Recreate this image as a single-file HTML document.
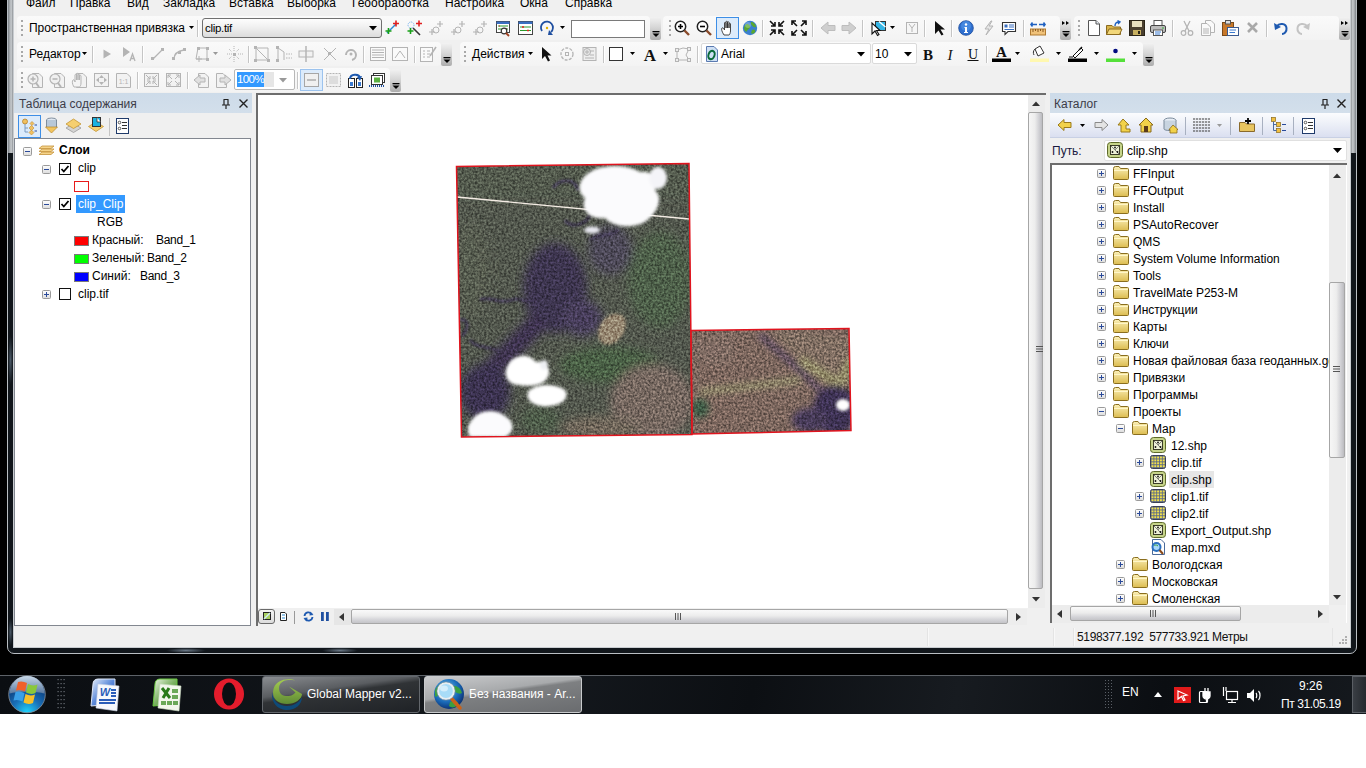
<!DOCTYPE html>
<html><head><meta charset="utf-8">
<style>
*{margin:0;padding:0;box-sizing:border-box}
html,body{width:1366px;height:768px;overflow:hidden;background:#fff;font-family:"Liberation Sans",sans-serif;font-size:12px;color:#000}
.a{position:absolute}
.t{white-space:nowrap}
svg{overflow:visible}
</style></head><body>
<div class="a" style="left:0px;top:0px;width:1366px;height:675px;background:#000"></div>
<div class="a" style="left:7px;top:-10px;width:1350px;height:664px;background:#11161b;border:1px solid #b9bec3;border-radius:0 0 7px 7px"></div>
<div class="a" style="left:8px;top:0px;width:5px;height:153px;background:linear-gradient(90deg,#7d8287 0%,#a9adb1 35%,#c6cacd 65%,#8f9397 100%)"></div>
<div class="a" style="left:1351px;top:0px;width:5px;height:153px;background:linear-gradient(90deg,#8f9397 0%,#c6cacd 35%,#a9adb1 65%,#7d8287 100%)"></div>
<div class="a" style="left:8px;top:335px;width:5px;height:50px;background:radial-gradient(ellipse at center,#4a5866 0%,#11161b 70%)"></div>
<div class="a" style="left:8px;top:618px;width:5px;height:28px;background:radial-gradient(ellipse at center,#4a5866 0%,#11161b 70%)"></div>
<div class="a" style="left:166px;top:648px;width:40px;height:5px;background:radial-gradient(ellipse at center,#6a7886 0%,#11161b 70%)"></div>
<div class="a" style="left:322px;top:648px;width:36px;height:5px;background:radial-gradient(ellipse at center,#6a7886 0%,#11161b 70%)"></div>
<div class="a" style="left:13px;top:-10px;width:1338px;height:658px;border:1px solid #c8ccd0"></div>
<div class="a" style="left:14px;top:0px;width:1336px;height:647px;background:#f0f0f0"></div>
<div class="a t" style="left:26px;top:-3.16px;font-size:12px;line-height:12px;">Файл</div>
<div class="a t" style="left:70px;top:-3.16px;font-size:12px;line-height:12px;">Правка</div>
<div class="a t" style="left:127px;top:-3.16px;font-size:12px;line-height:12px;">Вид</div>
<div class="a t" style="left:163px;top:-3.16px;font-size:12px;line-height:12px;">Закладка</div>
<div class="a t" style="left:229px;top:-3.16px;font-size:12px;line-height:12px;">Вставка</div>
<div class="a t" style="left:287px;top:-3.16px;font-size:12px;line-height:12px;">Выборка</div>
<div class="a t" style="left:352px;top:-3.16px;font-size:12px;line-height:12px;">Геообработка</div>
<div class="a t" style="left:445px;top:-3.16px;font-size:12px;line-height:12px;">Настройка</div>
<div class="a t" style="left:520px;top:-3.16px;font-size:12px;line-height:12px;">Окна</div>
<div class="a t" style="left:565px;top:-3.16px;font-size:12px;line-height:12px;">Справка</div>
<div class="a" style="left:17px;top:16px;width:633px;height:24px;background:linear-gradient(180deg,#fafafa,#f3f3f3);border-radius:4px"></div>
<div class="a" style="left:21px;top:20.0px;width:2px;height:2px;background:#a8a8a8"></div>
<div class="a" style="left:21px;top:24.5px;width:2px;height:2px;background:#a8a8a8"></div>
<div class="a" style="left:21px;top:29.0px;width:2px;height:2px;background:#a8a8a8"></div>
<div class="a" style="left:21px;top:33.5px;width:2px;height:2px;background:#a8a8a8"></div>
<div class="a t" style="left:29px;top:21.84px;font-size:12px;line-height:12px;letter-spacing:-0.08px">Пространственная привязка</div>
<svg class="a" style="left:189px;top:26px;" width="5" height="3" viewBox="0 0 5 3"><path d="M0 0H5L2.5 3Z" fill="#000"/></svg>
<div class="a" style="left:197px;top:20px;width:1px;height:17px;background:#c5c5c5;box-shadow:1px 0 0 #fff"></div>
<div class="a" style="left:202px;top:18px;width:180px;height:20px;background:linear-gradient(180deg,#fdfdfd 0%,#f0f0f0 45%,#dcdcdc 100%);border:1px solid #707070;border-radius:3px"></div>
<div class="a t" style="left:205px;top:23.27px;font-size:11.5px;line-height:11.5px;letter-spacing:-0.3px">clip.tif</div>
<svg class="a" style="left:369px;top:26px;" width="8" height="5" viewBox="0 0 8 5"><path d="M0 0H8L4 4.5Z" fill="#000"/></svg>
<svg class="a" style="left:384px;top:20px;" width="16" height="16" viewBox="0 0 16 16"><path d="M3 13L12 4" stroke="#2a8ad4" stroke-width="1.4"/><path d="M4.5 8V14M1.5 11H7.5" stroke="#18a018" stroke-width="1.6"/><path d="M12 0.5V6.5M9 3.5H15" stroke="#e02020" stroke-width="1.6"/></svg>
<svg class="a" style="left:406px;top:20px;" width="16" height="16" viewBox="0 0 16 16"><path d="M7 8L14 15" stroke="#333" stroke-width="1.6"/><circle cx="5" cy="5" r="3" fill="none" stroke="#66aaee" stroke-dasharray="1 1"/><path d="M4.5 8V14M1.5 11H7.5" stroke="#18a018" stroke-width="1.6"/><path d="M13 0.5V6.5M10 3.5H16" stroke="#e02020" stroke-width="1.6"/></svg>
<svg class="a" style="left:428px;top:20px;" width="16" height="16" viewBox="0 0 16 16"><path d="M12 1V7M9 4H15" stroke="#b4b4b4" stroke-width="1.2"/><path d="M4 9V15M1 12H7" stroke="#b4b4b4" stroke-width="1.2"/><circle cx="8" cy="10" r="3" fill="none" stroke="#b4b4b4"/></svg>
<svg class="a" style="left:450px;top:20px;" width="16" height="16" viewBox="0 0 16 16"><path d="M12 1V7M9 4H15" stroke="#b4b4b4" stroke-width="1.2"/><path d="M4 9V15M1 12H7" stroke="#b4b4b4" stroke-width="1.2"/><circle cx="8" cy="10" r="3" fill="none" stroke="#b4b4b4"/></svg>
<svg class="a" style="left:472px;top:20px;" width="16" height="16" viewBox="0 0 16 16"><path d="M12 1V7M9 4H15" stroke="#b4b4b4" stroke-width="1.2"/><path d="M4 9V15M1 12H7" stroke="#b4b4b4" stroke-width="1.2"/><circle cx="8" cy="10" r="3" fill="none" stroke="#b4b4b4"/></svg>
<svg class="a" style="left:495px;top:20px;" width="16" height="16" viewBox="0 0 16 16"><rect x="1.5" y="1.5" width="13" height="11" fill="#fff" stroke="#444"/><rect x="1.5" y="1.5" width="13" height="2.5" fill="#3a6fc0"/><path d="M3 6H13M3 9H13" stroke="#2a9a2a" stroke-width="1.2"/><path d="M4 6h1M10 9h2" stroke="#e02020" stroke-width="1.2"/><circle cx="9" cy="11" r="2.8" fill="#fff" stroke="#333" stroke-width="1.2"/><path d="M11 13L14 16" stroke="#a04020" stroke-width="1.8"/></svg>
<svg class="a" style="left:517px;top:20px;" width="16" height="16" viewBox="0 0 16 16"><rect x="1.5" y="1.5" width="14" height="13" fill="#fff" stroke="#444"/><rect x="1.5" y="1.5" width="14" height="2.5" fill="#3a6fc0"/><path d="M3 7H14M3 10.5H14" stroke="#2a9a2a" stroke-width="1.2"/><path d="M5 7h2M10 10.5h2" stroke="#e02020" stroke-width="1.4"/></svg>
<svg class="a" style="left:539px;top:20px;" width="16" height="16" viewBox="0 0 16 16"><path d="M3 11A6 6 0 1 1 12 12" fill="none" stroke="#1f4fa0" stroke-width="1.8"/><path d="M10 10L14 15L9 15Z" fill="#1f4fa0"/><circle cx="8" cy="8" r="1.2" fill="#e0b000"/></svg>
<svg class="a" style="left:560px;top:26px;" width="5" height="3" viewBox="0 0 5 3"><path d="M0 0H5L2.5 3Z" fill="#000"/></svg>
<div class="a" style="left:571px;top:20px;width:74px;height:18px;background:#fff;border:1px solid #7a7a7a"></div>
<div class="a" style="left:650px;top:17px;width:11px;height:23px;background:linear-gradient(180deg,#f2f2f2 0%,#d6d6d6 45%,#adadad 100%);border-radius:0 2px 2px 2px"></div>
<svg class="a" style="left:652px;top:31px;" width="8" height="6" viewBox="0 0 8 6"><rect x="0.5" y="0" width="7" height="1.3" fill="#000"/><path d="M0.5 2.5H7.5L4 6Z" fill="#000"/></svg>
<div class="a" style="left:663px;top:16px;width:397px;height:24px;background:linear-gradient(180deg,#fafafa,#f3f3f3);border-radius:4px"></div>
<div class="a" style="left:669px;top:20.0px;width:2px;height:2px;background:#a8a8a8"></div>
<div class="a" style="left:669px;top:24.5px;width:2px;height:2px;background:#a8a8a8"></div>
<div class="a" style="left:669px;top:29.0px;width:2px;height:2px;background:#a8a8a8"></div>
<div class="a" style="left:669px;top:33.5px;width:2px;height:2px;background:#a8a8a8"></div>
<svg class="a" style="left:674px;top:20px;" width="16" height="16" viewBox="0 0 16 16"><circle cx="6.5" cy="6.5" r="5.2" fill="#fff" stroke="#222" stroke-width="1.5"/><path d="M4 6.5H9M6.5 4V9" stroke="#000" stroke-width="1.6"/><path d="M10.5 10.5L15 15" stroke="#8a4a2a" stroke-width="2.4"/></svg>
<svg class="a" style="left:696px;top:20px;" width="16" height="16" viewBox="0 0 16 16"><circle cx="6.5" cy="6.5" r="5.2" fill="#fff" stroke="#222" stroke-width="1.5"/><path d="M4 6.5H9" stroke="#000" stroke-width="1.6"/><path d="M10.5 10.5L15 15" stroke="#8a4a2a" stroke-width="2.4"/></svg>
<div class="a" style="left:716px;top:17px;width:23px;height:22px;background:#dcebfb;border:1px solid #3d8ee6"></div>
<svg class="a" style="left:720px;top:20px;" width="16" height="16" viewBox="0 0 16 16"><path d="M4 15C2 12 1 9 2 8C3 7 4 9 4.5 10V3C4.5 2 6 2 6 3V8V2C6 1 7.5 1 7.5 2V8V2.5C7.5 1.5 9 1.5 9 2.5V8V4C9 3 10.5 3 10.5 4V11C10.5 13 9.5 15 9 15Z" fill="#fff" stroke="#333" stroke-width="0.9"/></svg>
<svg class="a" style="left:742px;top:20px;" width="16" height="16" viewBox="0 0 16 16"><circle cx="8" cy="8" r="7.2" fill="#3b7fd0"/><path d="M3 5C5 3 7 4 8 6C9 8 6 9 5 11C4 13 2 10 2 8Z M9 2C11 2 14 4 14 7C12 8 10 6 9 4Z M10 10C12 9 14 10 13 12C12 14 10 14 9 13Z" fill="#5aa830"/><circle cx="6" cy="5" r="3" fill="#fff" opacity="0.25"/></svg>
<div class="a" style="left:762px;top:20px;width:1px;height:17px;background:#c5c5c5;box-shadow:1px 0 0 #fff"></div>
<svg class="a" style="left:769px;top:20px;" width="16" height="16" viewBox="0 0 16 16"><path d="M1 1L6 6M6 2V6H2M15 1L10 6M10 2V6H14M1 15L6 10M2 10H6V14M15 15L10 10M14 10H10V14" stroke="#111" stroke-width="1.6" fill="none"/></svg>
<svg class="a" style="left:791px;top:20px;" width="16" height="16" viewBox="0 0 16 16"><path d="M6 6L1 1M1 5V1H5M10 6L15 1M11 1H15V5M6 10L1 15M1 11V15H5M10 10L15 15M15 11V15H11" stroke="#111" stroke-width="1.6" fill="none"/></svg>
<div class="a" style="left:812px;top:20px;width:1px;height:17px;background:#c5c5c5;box-shadow:1px 0 0 #fff"></div>
<svg class="a" style="left:820px;top:20px;" width="16" height="16" viewBox="0 0 16 16"><path d="M1 8L8 2V5.5H15V10.5H8V14Z" fill="#cfcfcf" stroke="#bdbdbd"/></svg>
<svg class="a" style="left:841px;top:20px;" width="16" height="16" viewBox="0 0 16 16"><path d="M15 8L8 2V5.5H1V10.5H8V14Z" fill="#cfcfcf" stroke="#bdbdbd"/></svg>
<div class="a" style="left:862px;top:20px;width:1px;height:17px;background:#c5c5c5;box-shadow:1px 0 0 #fff"></div>
<svg class="a" style="left:870px;top:20px;" width="16" height="16" viewBox="0 0 16 16"><rect x="5.5" y="1.5" width="10" height="9" fill="#35b5e5" stroke="#333"/><path d="M9 1.5L15.5 7" stroke="#fff" stroke-width="1.5"/><path d="M2 3L2 14L5 11L7.5 15.5L9 14.5L6.5 10.5H10Z" fill="#fff" stroke="#111" stroke-width="1.1"/></svg>
<svg class="a" style="left:890px;top:26px;" width="5" height="3" viewBox="0 0 5 3"><path d="M0 0H5L2.5 3Z" fill="#000"/></svg>
<svg class="a" style="left:905px;top:20px;" width="14" height="16" viewBox="0 0 14 16"><rect x="1.5" y="2.5" width="11" height="11" fill="#f6f6f6" stroke="#b4b4b4"/><path d="M4 4L7 8L10 4M7 8V12" stroke="#b4b4b4" fill="none"/></svg>
<div class="a" style="left:924px;top:20px;width:1px;height:17px;background:#c5c5c5;box-shadow:1px 0 0 #fff"></div>
<svg class="a" style="left:933px;top:20px;" width="16" height="16" viewBox="0 0 16 16"><path d="M2 1L2 14L5.5 10.5L8.5 15.5L10.5 14.5L7.5 9.5H12Z" fill="#111"/></svg>
<div class="a" style="left:951px;top:20px;width:1px;height:17px;background:#c5c5c5;box-shadow:1px 0 0 #fff"></div>
<svg class="a" style="left:958px;top:20px;" width="16" height="16" viewBox="0 0 16 16"><circle cx="8" cy="8" r="7.3" fill="#2f6fcf" stroke="#1a4a9a" stroke-width="0.8"/><circle cx="8" cy="6" r="5" fill="#5aa0f0" opacity="0.5"/><circle cx="8" cy="4.5" r="1.2" fill="#fff"/><path d="M6.5 7H9V12H10V13H6V12H7V8H6.5Z" fill="#fff"/></svg>
<svg class="a" style="left:981px;top:20px;" width="16" height="16" viewBox="0 0 16 16"><path d="M10 1L4 9H8L5 15L12 6H8L11 1Z" fill="#e6e6e6" stroke="#b4b4b4"/></svg>
<svg class="a" style="left:1001px;top:20px;" width="16" height="16" viewBox="0 0 16 16"><path d="M1.5 2.5H14.5V11.5H7L4 14.5V11.5H1.5Z" fill="#fff" stroke="#333" stroke-width="1.1"/><rect x="3.5" y="4.5" width="3" height="3" fill="#3a6fc0"/><path d="M8 5H13M8 7H13M3.5 9.5H13" stroke="#3a6fc0"/></svg>
<div class="a" style="left:1023px;top:20px;width:1px;height:17px;background:#c5c5c5;box-shadow:1px 0 0 #fff"></div>
<svg class="a" style="left:1030px;top:20px;" width="16" height="16" viewBox="0 0 16 16"><path d="M1 4.5H7M2.5 2.5L1 4.5L2.5 6.5M9 4.5H15M13.5 2.5L15 4.5L13.5 6.5" stroke="#1f60c0" stroke-width="1.6" fill="none"/><rect x="0.5" y="9" width="15" height="6" fill="#f0c27a" stroke="#b07a30"/><path d="M3 9V12M5.5 9V11M8 9V12M10.5 9V11M13 9V12" stroke="#8a5a20"/></svg>
<div class="a" style="left:1060px;top:17px;width:11px;height:23px;background:linear-gradient(180deg,#f2f2f2 0%,#d6d6d6 45%,#adadad 100%);border-radius:0 2px 2px 2px"></div>
<svg class="a" style="left:1062px;top:21px;" width="8" height="4" viewBox="0 0 8 4"><path d="M0 0L3 2L0 4Z M4 0L7 2L4 4Z" fill="#000"/></svg>
<svg class="a" style="left:1062px;top:31px;" width="8" height="6" viewBox="0 0 8 6"><rect x="0.5" y="0" width="7" height="1.3" fill="#000"/><path d="M0.5 2.5H7.5L4 6Z" fill="#000"/></svg>
<div class="a" style="left:1074px;top:16px;width:265px;height:24px;background:linear-gradient(180deg,#fafafa,#f3f3f3);border-radius:4px"></div>
<div class="a" style="left:1078px;top:20.0px;width:2px;height:2px;background:#a8a8a8"></div>
<div class="a" style="left:1078px;top:24.5px;width:2px;height:2px;background:#a8a8a8"></div>
<div class="a" style="left:1078px;top:29.0px;width:2px;height:2px;background:#a8a8a8"></div>
<div class="a" style="left:1078px;top:33.5px;width:2px;height:2px;background:#a8a8a8"></div>
<svg class="a" style="left:1086px;top:20px;" width="16" height="16" viewBox="0 0 16 16"><path d="M2.5 0.5H10L13.5 4V15.5H2.5Z" fill="#fff" stroke="#555"/><path d="M10 0.5V4H13.5" fill="#e8eef8" stroke="#555"/></svg>
<svg class="a" style="left:1106px;top:20px;" width="17" height="16" viewBox="0 0 17 16"><path d="M0.5 5.5H6L7.5 7H14.5V14.5H0.5Z" fill="#d9b44a" stroke="#8a6a20"/><path d="M3 9H16L13.5 14.5H0.5Z" fill="#f2d77a" stroke="#8a6a20"/><path d="M9 6C9 3 11 2 13 2M11.5 0.5L14 2L12 4" stroke="#1f60c0" stroke-width="1.4" fill="none"/></svg>
<svg class="a" style="left:1129px;top:20px;" width="16" height="16" viewBox="0 0 16 16"><rect x="0.5" y="0.5" width="15" height="15" fill="#4a4030" stroke="#2a2418"/><rect x="3" y="1" width="10" height="6" fill="#e8e0c0"/><rect x="4" y="10" width="8" height="5" fill="#c8b060"/><rect x="9" y="11" width="2" height="3" fill="#2a2418"/></svg>
<svg class="a" style="left:1150px;top:20px;" width="16" height="16" viewBox="0 0 16 16"><rect x="4" y="0.5" width="8" height="6" fill="#fff" stroke="#555"/><rect x="0.5" y="5.5" width="15" height="7" rx="1.5" fill="#bbb" stroke="#444"/><rect x="3.5" y="10" width="9" height="5.5" fill="#fff" stroke="#555"/><path d="M5 12H11M5 14H10" stroke="#3a7ad0"/><circle cx="13" cy="8" r="0.8" fill="#2a2"/></svg>
<div class="a" style="left:1172px;top:20px;width:1px;height:17px;background:#c5c5c5;box-shadow:1px 0 0 #fff"></div>
<svg class="a" style="left:1179px;top:20px;" width="16" height="16" viewBox="0 0 16 16"><path d="M5 1L10 11M11 1L6 11" stroke="#b4b4b4" stroke-width="1.3"/><circle cx="4.5" cy="13" r="2.3" fill="none" stroke="#b4b4b4" stroke-width="1.2"/><circle cx="11.5" cy="13" r="2.3" fill="none" stroke="#b4b4b4" stroke-width="1.2"/></svg>
<svg class="a" style="left:1200px;top:20px;" width="16" height="16" viewBox="0 0 16 16"><path d="M5.5 0.5H11L14.5 4V12.5H5.5Z" fill="#fafafa" stroke="#b4b4b4"/><path d="M1.5 3.5H7L10.5 7V15.5H1.5Z" fill="#fafafa" stroke="#b4b4b4"/><path d="M3 9H9M3 11H9M3 13H9" stroke="#b4b4b4"/></svg>
<svg class="a" style="left:1222px;top:20px;" width="17" height="16" viewBox="0 0 17 16"><rect x="0.5" y="2.5" width="11" height="13" fill="#c8782a" stroke="#7a4a1a"/><rect x="3.5" y="0.5" width="5" height="3.5" fill="#ddd" stroke="#555"/><rect x="5.5" y="7.5" width="11" height="8" fill="#fff" stroke="#3a5a90"/><path d="M7.5 10H14M7.5 12.5H13" stroke="#3a7ad0"/></svg>
<svg class="a" style="left:1247px;top:22px;" width="11" height="11" viewBox="0 0 11 11"><path d="M1 1L10 10M10 1L1 10" stroke="#a9a9a9" stroke-width="2.6"/></svg>
<div class="a" style="left:1266px;top:20px;width:1px;height:17px;background:#c5c5c5;box-shadow:1px 0 0 #fff"></div>
<svg class="a" style="left:1273px;top:20px;" width="16" height="16" viewBox="0 0 16 16"><path d="M4 6C6 3 13 3 13.5 8C14 12 11 14 9 14" stroke="#1f5ab0" stroke-width="2" fill="none"/><path d="M1 3L2 10L8 7Z" fill="#1f5ab0"/></svg>
<svg class="a" style="left:1295px;top:20px;" width="16" height="16" viewBox="0 0 16 16"><path d="M12 6C10 3 3 3 2.5 8C2 12 5 14 7 14" stroke="#c4c4c4" stroke-width="2" fill="none"/><path d="M15 3L14 10L8 7Z" fill="#c4c4c4"/></svg>
<div class="a" style="left:1339px;top:17px;width:11px;height:23px;background:linear-gradient(180deg,#f2f2f2 0%,#d6d6d6 45%,#adadad 100%);border-radius:0 2px 2px 2px"></div>
<svg class="a" style="left:1341px;top:21px;" width="8" height="4" viewBox="0 0 8 4"><path d="M0 0L3 2L0 4Z M4 0L7 2L4 4Z" fill="#000"/></svg>
<svg class="a" style="left:1341px;top:31px;" width="8" height="6" viewBox="0 0 8 6"><rect x="0.5" y="0" width="7" height="1.3" fill="#000"/><path d="M0.5 2.5H7.5L4 6Z" fill="#000"/></svg>
<div class="a" style="left:17px;top:42px;width:424px;height:24px;background:linear-gradient(180deg,#fafafa,#f3f3f3);border-radius:4px"></div>
<div class="a" style="left:21px;top:46.0px;width:2px;height:2px;background:#a8a8a8"></div>
<div class="a" style="left:21px;top:50.5px;width:2px;height:2px;background:#a8a8a8"></div>
<div class="a" style="left:21px;top:55.0px;width:2px;height:2px;background:#a8a8a8"></div>
<div class="a" style="left:21px;top:59.5px;width:2px;height:2px;background:#a8a8a8"></div>
<div class="a t" style="left:29px;top:47.84px;font-size:12px;line-height:12px;">Редактор</div>
<svg class="a" style="left:82px;top:52px;" width="5" height="3" viewBox="0 0 5 3"><path d="M0 0H5L2.5 3Z" fill="#000"/></svg>
<div class="a" style="left:92px;top:46px;width:1px;height:17px;background:#c5c5c5;box-shadow:1px 0 0 #fff"></div>
<svg class="a" style="left:103px;top:49px;" width="10" height="10" viewBox="0 0 10 10"><path d="M0.5 0.5V9.5L8 5Z" fill="#b4b4b4"/></svg>
<svg class="a" style="left:122px;top:46px;" width="14" height="16" viewBox="0 0 14 16"><path d="M1 1V11L8 6Z" fill="#b4b4b4"/><path d="M8 15L10.5 8L13 15M9 12.5H12" stroke="#b4b4b4" stroke-width="1.3" fill="none"/></svg>
<div class="a" style="left:142px;top:46px;width:1px;height:17px;background:#c5c5c5;box-shadow:1px 0 0 #fff"></div>
<svg class="a" style="left:151px;top:47px;" width="14" height="14" viewBox="0 0 14 14"><path d="M2 12L11 3" stroke="#b4b4b4" stroke-width="1.3"/><rect x="0" y="10" width="3" height="3" fill="#b4b4b4"/><rect x="10" y="1" width="3" height="3" fill="#b4b4b4"/></svg>
<svg class="a" style="left:172px;top:47px;" width="14" height="14" viewBox="0 0 14 14"><path d="M2 12C2 7 6 4 12 3" stroke="#b4b4b4" stroke-width="1.3" fill="none"/><rect x="0" y="10" width="3" height="3" fill="#b4b4b4"/><rect x="6" y="4" width="3" height="3" fill="#b4b4b4"/><rect x="11" y="1" width="3" height="3" fill="#b4b4b4"/></svg>
<svg class="a" style="left:194px;top:46px;" width="16" height="16" viewBox="0 0 16 16"><path d="M4 2H13V13H2Z" stroke="#b4b4b4" fill="none"/><rect x="3" y="1" width="3" height="3" fill="#b4b4b4"/><rect x="12" y="1" width="3" height="3" fill="#b4b4b4"/><rect x="12" y="12" width="3" height="3" fill="#b4b4b4"/><path d="M5 10V16M2 13H8" stroke="#b4b4b4"/></svg>
<svg class="a" style="left:213px;top:52px;" width="5" height="3" viewBox="0 0 5 3"><path d="M0 0H5L2.5 3Z" fill="#999"/></svg>
<svg class="a" style="left:227px;top:46px;" width="16" height="16" viewBox="0 0 16 16"><path d="M7 0V5M7 11V16M0 8H5M11 8H16M2 3L5 6M12 3L9 6M2 13L5 10M12 13L9 10" stroke="#b4b4b4" stroke-dasharray="1 1"/><rect x="6" y="7" width="3" height="3" fill="#b4b4b4"/></svg>
<div class="a" style="left:248px;top:46px;width:1px;height:17px;background:#c5c5c5;box-shadow:1px 0 0 #fff"></div>
<svg class="a" style="left:254px;top:46px;" width="16" height="16" viewBox="0 0 16 16"><path d="M2 2H14L14 14L2 14Z" stroke="#b4b4b4" fill="none"/><path d="M2 2L14 14" stroke="#b4b4b4"/><rect x="0" y="0" width="3" height="3" fill="#b4b4b4"/><rect x="13" y="13" width="3" height="3" fill="#b4b4b4"/><rect x="0" y="13" width="3" height="3" fill="#b4b4b4"/></svg>
<svg class="a" style="left:276px;top:46px;" width="16" height="16" viewBox="0 0 16 16"><path d="M2 2V14M2 2L8 6V14" stroke="#b4b4b4" fill="none"/><path d="M10 8H16M10 12H16" stroke="#b4b4b4" stroke-dasharray="1.5 1"/><rect x="0" y="0" width="3" height="3" fill="#b4b4b4"/><rect x="0" y="13" width="3" height="3" fill="#b4b4b4"/></svg>
<svg class="a" style="left:298px;top:46px;" width="16" height="16" viewBox="0 0 16 16"><rect x="1" y="5" width="14" height="6" fill="#f2f2f2" stroke="#b4b4b4"/><path d="M8 0V16" stroke="#b4b4b4" stroke-width="1.5"/></svg>
<svg class="a" style="left:322px;top:46px;" width="14" height="16" viewBox="0 0 14 16"><path d="M2 14L14 2M2 2L14 14" stroke="#b4b4b4"/><rect x="6" y="6" width="3" height="3" fill="#b4b4b4"/></svg>
<svg class="a" style="left:343px;top:46px;" width="14" height="16" viewBox="0 0 14 16"><path d="M3 9A5 5 0 1 1 9 14" stroke="#b4b4b4" stroke-width="2" fill="none"/><circle cx="8" cy="8" r="1.5" fill="#b4b4b4"/></svg>
<div class="a" style="left:363px;top:46px;width:1px;height:17px;background:#c5c5c5;box-shadow:1px 0 0 #fff"></div>
<svg class="a" style="left:370px;top:46px;" width="16" height="16" viewBox="0 0 16 16"><rect x="0.5" y="1.5" width="15" height="13" fill="#fafafa" stroke="#b4b4b4"/><path d="M2 4H14M2 6.5H14M2 9H14M2 11.5H14" stroke="#b4b4b4"/></svg>
<svg class="a" style="left:392px;top:46px;" width="16" height="16" viewBox="0 0 16 16"><rect x="0.5" y="1.5" width="15" height="13" fill="#fafafa" stroke="#b4b4b4"/><path d="M3 12L8 5L13 12" stroke="#b4b4b4" fill="none"/></svg>
<div class="a" style="left:414px;top:46px;width:1px;height:17px;background:#c5c5c5;box-shadow:1px 0 0 #fff"></div>
<svg class="a" style="left:420px;top:46px;" width="16" height="16" viewBox="0 0 16 16"><rect x="0.5" y="1.5" width="12" height="14" fill="#fafafa" stroke="#b4b4b4"/><path d="M3 5H5M7 5H10M3 8H5M7 8H10M3 11H5M7 11H10" stroke="#b4b4b4"/><path d="M10 10L16 1" stroke="#b4b4b4" stroke-width="1.6"/></svg>
<div class="a" style="left:441px;top:43px;width:11px;height:23px;background:linear-gradient(180deg,#f2f2f2 0%,#d6d6d6 45%,#adadad 100%);border-radius:0 2px 2px 2px"></div>
<svg class="a" style="left:443px;top:57px;" width="8" height="6" viewBox="0 0 8 6"><rect x="0.5" y="0" width="7" height="1.3" fill="#000"/><path d="M0.5 2.5H7.5L4 6Z" fill="#000"/></svg>
<div class="a" style="left:460px;top:42px;width:683px;height:24px;background:linear-gradient(180deg,#fafafa,#f3f3f3);border-radius:4px"></div>
<div class="a" style="left:464px;top:46.0px;width:2px;height:2px;background:#a8a8a8"></div>
<div class="a" style="left:464px;top:50.5px;width:2px;height:2px;background:#a8a8a8"></div>
<div class="a" style="left:464px;top:55.0px;width:2px;height:2px;background:#a8a8a8"></div>
<div class="a" style="left:464px;top:59.5px;width:2px;height:2px;background:#a8a8a8"></div>
<div class="a t" style="left:472px;top:47.84px;font-size:12px;line-height:12px;">Действия</div>
<svg class="a" style="left:528px;top:52px;" width="5" height="3" viewBox="0 0 5 3"><path d="M0 0H5L2.5 3Z" fill="#000"/></svg>
<svg class="a" style="left:541px;top:46px;" width="11" height="16" viewBox="0 0 11 16"><path d="M1 1L1 13L4 10L7 15.5L9 14.5L6.5 9.5H10.5Z" fill="#111"/></svg>
<svg class="a" style="left:559px;top:46px;" width="16" height="16" viewBox="0 0 16 16"><circle cx="8" cy="8" r="6" fill="none" stroke="#b4b4b4" stroke-width="1.3" stroke-dasharray="3 1.3"/><rect x="6.5" y="6.5" width="3" height="3" fill="none" stroke="#b4b4b4"/></svg>
<svg class="a" style="left:581px;top:46px;" width="16" height="16" viewBox="0 0 16 16"><rect x="2" y="1.5" width="13" height="13" fill="#eee" stroke="#b4b4b4"/><circle cx="6" cy="6" r="3.5" fill="#e6e6e6" stroke="#b4b4b4"/><path d="M4 6H8M6 4V8" stroke="#b4b4b4"/><path d="M9 5H13M9 9H13M4 12H13" stroke="#b4b4b4"/></svg>
<div class="a" style="left:603px;top:46px;width:1px;height:17px;background:#c5c5c5;box-shadow:1px 0 0 #fff"></div>
<svg class="a" style="left:609px;top:47px;" width="14" height="14" viewBox="0 0 14 14"><rect x="0.5" y="0.5" width="13" height="13" fill="#fff" stroke="#333"/></svg>
<svg class="a" style="left:630px;top:52px;" width="5" height="3" viewBox="0 0 5 3"><path d="M0 0H5L2.5 3Z" fill="#000"/></svg>
<svg class="a" style="left:642px;top:46px;" width="16" height="16" viewBox="0 0 16 16"><text x="8" y="14.5" text-anchor="middle" font-family="Liberation Serif" font-weight="bold" font-size="17" fill="#111">A</text></svg>
<svg class="a" style="left:663px;top:52px;" width="5" height="3" viewBox="0 0 5 3"><path d="M0 0H5L2.5 3Z" fill="#000"/></svg>
<svg class="a" style="left:675px;top:46px;" width="16" height="16" viewBox="0 0 16 16"><path d="M2 4L8 2L14 3L11 9L14 14L2 14Z" stroke="#b4b4b4" fill="none"/><rect x="0.5" y="2.5" width="3" height="3" fill="#eee" stroke="#b4b4b4"/><rect x="12.5" y="1.5" width="3" height="3" fill="#eee" stroke="#b4b4b4"/><rect x="12.5" y="12.5" width="3" height="3" fill="#eee" stroke="#b4b4b4"/><rect x="0.5" y="12.5" width="3" height="3" fill="#eee" stroke="#b4b4b4"/></svg>
<div class="a" style="left:697px;top:46px;width:1px;height:17px;background:#c5c5c5;box-shadow:1px 0 0 #fff"></div>
<div class="a" style="left:701px;top:43px;width:170px;height:21px;background:#fff;border:1px solid #dadada;border-radius:2px"></div>
<svg class="a" style="left:704px;top:46px;" width="14" height="16" viewBox="0 0 14 16"><path d="M2.5 0.5H10L13.5 4V15.5H2.5Z" fill="#cfe0f5" stroke="#5a7ab0"/><ellipse cx="7.5" cy="9" rx="3" ry="4.3" fill="none" stroke="#0a6a3a" stroke-width="2" transform="rotate(20 7.5 9)"/></svg>
<div class="a t" style="left:721px;top:47.84px;font-size:12px;line-height:12px;">Arial</div>
<svg class="a" style="left:857px;top:52px;" width="8" height="5" viewBox="0 0 8 5"><path d="M0 0H8L4 4.5Z" fill="#000"/></svg>
<div class="a" style="left:872px;top:43px;width:45px;height:21px;background:#fff;border:1px solid #dadada;border-radius:2px"></div>
<div class="a t" style="left:875px;top:47.84px;font-size:12px;line-height:12px;">10</div>
<svg class="a" style="left:904px;top:52px;" width="8" height="5" viewBox="0 0 8 5"><path d="M0 0H8L4 4.5Z" fill="#000"/></svg>
<svg class="a" style="left:921px;top:46px;" width="14" height="16" viewBox="0 0 14 16"><text x="7" y="13.5" text-anchor="middle" font-family="Liberation Serif" font-weight="bold" font-size="15" fill="#111">B</text></svg>
<svg class="a" style="left:944px;top:46px;" width="12" height="16" viewBox="0 0 12 16"><text x="6" y="13.5" text-anchor="middle" font-family="Liberation Serif" font-style="italic" font-size="15" fill="#111">I</text></svg>
<svg class="a" style="left:966px;top:46px;" width="14" height="16" viewBox="0 0 14 16"><text x="7" y="12.5" text-anchor="middle" font-family="Liberation Serif" font-size="14" fill="#111">U</text><path d="M1.5 14.5H12.5" stroke="#111"/></svg>
<div class="a" style="left:986px;top:46px;width:1px;height:17px;background:#c5c5c5;box-shadow:1px 0 0 #fff"></div>
<svg class="a" style="left:992px;top:45px;" width="19" height="18" viewBox="0 0 19 18"><text x="9.5" y="12" text-anchor="middle" font-family="Liberation Serif" font-weight="bold" font-size="15" fill="#111">A</text><rect x="0" y="13.5" width="19" height="3.5" fill="#000"/></svg>
<svg class="a" style="left:1015px;top:52px;" width="5" height="3" viewBox="0 0 5 3"><path d="M0 0H5L2.5 3Z" fill="#000"/></svg>
<svg class="a" style="left:1030px;top:45px;" width="19" height="18" viewBox="0 0 19 18"><path d="M5 4L10 1L14 8L8 11Z" fill="#fff" stroke="#333"/><path d="M5 4C3 6 3 8 4 10" stroke="#333" fill="none"/><rect x="0" y="13.5" width="19" height="3.5" fill="#fff8b0"/></svg>
<svg class="a" style="left:1056px;top:52px;" width="5" height="3" viewBox="0 0 5 3"><path d="M0 0H5L2.5 3Z" fill="#000"/></svg>
<svg class="a" style="left:1068px;top:45px;" width="19" height="18" viewBox="0 0 19 18"><path d="M5 11L13 3L15 5L7 13Z" fill="#fff" stroke="#111"/><path d="M11 5L14 2" stroke="#111" stroke-width="1.5"/><path d="M1 12H5" stroke="#111"/><rect x="0" y="13.5" width="19" height="3.5" fill="#000"/></svg>
<svg class="a" style="left:1094px;top:52px;" width="5" height="3" viewBox="0 0 5 3"><path d="M0 0H5L2.5 3Z" fill="#000"/></svg>
<svg class="a" style="left:1106px;top:45px;" width="19" height="18" viewBox="0 0 19 18"><circle cx="9.5" cy="6" r="2.3" fill="#000a80"/><rect x="0" y="13.5" width="19" height="3.5" fill="#55e03a"/></svg>
<svg class="a" style="left:1132px;top:52px;" width="5" height="3" viewBox="0 0 5 3"><path d="M0 0H5L2.5 3Z" fill="#000"/></svg>
<div class="a" style="left:1143px;top:43px;width:11px;height:23px;background:linear-gradient(180deg,#f2f2f2 0%,#d6d6d6 45%,#adadad 100%);border-radius:0 2px 2px 2px"></div>
<svg class="a" style="left:1145px;top:57px;" width="8" height="6" viewBox="0 0 8 6"><rect x="0.5" y="0" width="7" height="1.3" fill="#000"/><path d="M0.5 2.5H7.5L4 6Z" fill="#000"/></svg>
<div class="a" style="left:17px;top:68px;width:373px;height:24px;background:linear-gradient(180deg,#fafafa,#f3f3f3);border-radius:4px"></div>
<div class="a" style="left:21px;top:72.0px;width:2px;height:2px;background:#a8a8a8"></div>
<div class="a" style="left:21px;top:76.5px;width:2px;height:2px;background:#a8a8a8"></div>
<div class="a" style="left:21px;top:81.0px;width:2px;height:2px;background:#a8a8a8"></div>
<div class="a" style="left:21px;top:85.5px;width:2px;height:2px;background:#a8a8a8"></div>
<svg class="a" style="left:27px;top:72px;" width="17" height="16" viewBox="0 0 17 16"><path d="M5.5 1.5H12L15.5 5V15.5H5.5Z" fill="#f2f2f2" stroke="#b4b4b4"/><circle cx="6" cy="7" r="5" fill="#f0f0f0" stroke="#b4b4b4" stroke-width="1.2"/><path d="M3.5 7H8.5" stroke="#b4b4b4" stroke-width="1.5"/><path d="M6 4.5V9.5" stroke="#b4b4b4" stroke-width="1.5"/><path d="M9 11L12 15" stroke="#b4b4b4" stroke-width="2"/></svg>
<svg class="a" style="left:49px;top:72px;" width="17" height="16" viewBox="0 0 17 16"><path d="M5.5 1.5H12L15.5 5V15.5H5.5Z" fill="#f2f2f2" stroke="#b4b4b4"/><circle cx="6" cy="7" r="5" fill="#f0f0f0" stroke="#b4b4b4" stroke-width="1.2"/><path d="M3.5 7H8.5" stroke="#b4b4b4" stroke-width="1.5"/><path d="M9 11L12 15" stroke="#b4b4b4" stroke-width="2"/></svg>
<svg class="a" style="left:71px;top:72px;" width="17" height="16" viewBox="0 0 17 16"><path d="M5.5 1.5H12L15.5 5V15.5H5.5Z" fill="#f2f2f2" stroke="#b4b4b4"/><path d="M3 15C1 12 1 9 2 8C3 7 4 9 4 10V3C4 2 5.5 2 5.5 3V8V2C5.5 1 7 1 7 2V8V3C7 2 8.5 2 8.5 3V8V4C8.5 3 10 3 10 4V11C10 13 9 15 8.5 15Z" fill="#f4f4f4" stroke="#b4b4b4"/></svg>
<svg class="a" style="left:93px;top:72px;" width="17" height="16" viewBox="0 0 17 16"><rect x="1.5" y="1.5" width="14" height="13" fill="#f2f2f2" stroke="#b4b4b4"/><path d="M8.5 3L6 6H11Z M8.5 13L6 10H11Z M3 8L6 5.5V10.5Z M14 8L11 5.5V10.5Z" fill="#b4b4b4"/></svg>
<svg class="a" style="left:115px;top:72px;" width="17" height="16" viewBox="0 0 17 16"><path d="M1.5 1.5H12L15.5 5V15.5H1.5Z" fill="#f2f2f2" stroke="#b4b4b4"/><text x="8.5" y="12" text-anchor="middle" font-size="7" font-family="Liberation Sans" fill="#b4b4b4">1:1</text></svg>
<div class="a" style="left:137px;top:72px;width:1px;height:17px;background:#c5c5c5;box-shadow:1px 0 0 #fff"></div>
<svg class="a" style="left:143px;top:72px;" width="17" height="16" viewBox="0 0 17 16"><rect x="1.5" y="1.5" width="14" height="13" fill="#f2f2f2" stroke="#b4b4b4"/><path d="M3 3L7 7M7 4V7H4M14 3L10 7M10 4V7H13M3 13L7 9M4 9H7V12M14 13L10 9M13 9H10V12" stroke="#b4b4b4" fill="none"/></svg>
<svg class="a" style="left:165px;top:72px;" width="17" height="16" viewBox="0 0 17 16"><rect x="1.5" y="1.5" width="14" height="13" fill="#f2f2f2" stroke="#b4b4b4"/><path d="M7 7L3 3M3 6V3H6M10 7L14 3M11 3H14V6M7 9L3 13M3 10V13H6M10 9L14 13M14 10V13H11" stroke="#b4b4b4" fill="none"/></svg>
<div class="a" style="left:187px;top:72px;width:1px;height:17px;background:#c5c5c5;box-shadow:1px 0 0 #fff"></div>
<svg class="a" style="left:193px;top:72px;" width="17" height="16" viewBox="0 0 17 16"><path d="M5.5 1.5H12L15.5 5V15.5H5.5Z" fill="#f2f2f2" stroke="#b4b4b4"/><path d="M1 8L7 3V6H12V10H7V13Z" fill="#e0e0e0" stroke="#b4b4b4"/></svg>
<svg class="a" style="left:215px;top:72px;" width="17" height="16" viewBox="0 0 17 16"><path d="M1.5 1.5H8L11.5 5V15.5H1.5Z" fill="#f2f2f2" stroke="#b4b4b4"/><path d="M16 8L10 3V6H5V10H10V13Z" fill="#e0e0e0" stroke="#b4b4b4"/></svg>
<div class="a" style="left:234px;top:69px;width:61px;height:21px;background:#fff;border:1px solid #b8b8b8;border-radius:2px"></div>
<div class="a" style="left:237px;top:72px;width:27px;height:15px;background:#3399ff"></div>
<div class="a" style="left:264px;top:72px;width:10px;height:15px;background:#e6e6e6"></div>
<div class="a t" style="left:237px;top:74.27px;font-size:11.5px;line-height:11.5px;color:#fff;letter-spacing:-0.6px">100%</div>
<svg class="a" style="left:279px;top:78px;" width="8" height="5" viewBox="0 0 8 5"><path d="M0 0H8L4 4.5Z" fill="#999"/></svg>
<div class="a" style="left:297px;top:72px;width:1px;height:17px;background:#c5c5c5;box-shadow:1px 0 0 #fff"></div>
<div class="a" style="left:300px;top:69px;width:23px;height:22px;background:#dcebfb;border:1px solid #9cc3ee"></div>
<svg class="a" style="left:303px;top:72px;" width="17" height="16" viewBox="0 0 17 16"><rect x="1.5" y="1.5" width="14" height="13" fill="#f0f0f0" stroke="#a6a6a6"/><path d="M4 8H13" stroke="#a6a6a6" stroke-width="1.4"/></svg>
<svg class="a" style="left:325px;top:72px;" width="17" height="16" viewBox="0 0 17 16"><rect x="1.5" y="1.5" width="14" height="13" fill="#f2f2f2" stroke="#b4b4b4" stroke-dasharray="2 1"/><rect x="4" y="4" width="9" height="8" fill="#ddd"/></svg>
<svg class="a" style="left:347px;top:72px;" width="17" height="16" viewBox="0 0 17 16"><rect x="1.5" y="6.5" width="6" height="9" fill="#fff" stroke="#222"/><rect x="9.5" y="6.5" width="6" height="9" fill="#fff" stroke="#222"/><path d="M3 7C3 2 12 1 13 6" stroke="#1f5ab0" stroke-width="2" fill="none"/><path d="M10 5L15 4L13 9Z" fill="#1f5ab0"/><rect x="3" y="10" width="3" height="4" fill="#3a7ad0"/><rect x="11" y="10" width="3" height="4" fill="#3a7ad0"/></svg>
<svg class="a" style="left:369px;top:72px;" width="17" height="16" viewBox="0 0 17 16"><rect x="4.5" y="1.5" width="11" height="9" fill="#fff" stroke="#333"/><rect x="2.5" y="3.5" width="11" height="9" fill="#fff" stroke="#333"/><rect x="5" y="5.5" width="6" height="5" fill="#5ab040"/><path d="M0 14H16" stroke="#1f4fa0" stroke-width="2" stroke-dasharray="1 1"/></svg>
<div class="a" style="left:390px;top:69px;width:11px;height:23px;background:linear-gradient(180deg,#f2f2f2 0%,#d6d6d6 45%,#adadad 100%);border-radius:0 2px 2px 2px"></div>
<svg class="a" style="left:392px;top:83px;" width="8" height="6" viewBox="0 0 8 6"><rect x="0.5" y="0" width="7" height="1.3" fill="#000"/><path d="M0.5 2.5H7.5L4 6Z" fill="#000"/></svg>
<svg width="0" height="0" style="position:absolute"><defs><linearGradient id="gbx" x1="0" y1="0" x2="0" y2="1"><stop offset="0" stop-color="#fff"/><stop offset="1" stop-color="#dcdcdc"/></linearGradient></defs></svg>
<div class="a" style="left:14px;top:93px;width:238px;height:20px;background:linear-gradient(180deg,#cddbe9,#d3dfeb)"></div>
<div class="a t" style="left:19px;top:98.34px;font-size:12px;line-height:12px;color:#3c3c48">Таблица содержания</div>
<svg class="a" style="left:222px;top:99px;" width="8" height="10" viewBox="0 0 8 10"><path d="M1.5 0.5H6.5M2 0.5V6M6 0.5V6M0 6H8M4 6V10" stroke="#222" stroke-width="1.2" fill="none"/></svg>
<svg class="a" style="left:239px;top:99px;" width="9" height="9" viewBox="0 0 9 9"><path d="M0.5 0.5L8.5 8.5M8.5 0.5L0.5 8.5" stroke="#222" stroke-width="1.4"/></svg>
<div class="a" style="left:14px;top:113px;width:238px;height:25px;background:#f0f0f0"></div>
<div class="a" style="left:18px;top:115px;width:23px;height:23px;background:#dcebfb;border:1px solid #3d8ee6"></div>
<svg class="a" style="left:21px;top:118px;" width="17" height="17" viewBox="0 0 17 17"><circle cx="4" cy="3.5" r="2.5" fill="#f0c060" stroke="#b07a20" stroke-width="0.7"/><path d="M4 6V14H7M4 10H7" stroke="#7a9ac0" fill="none"/><path d="M9 5.5L11 3.5L13 5.5L11 7.5Z M8 10L10.5 7.5L13 10L10.5 12.5Z M8 14.5L10.5 12L13 14.5L10.5 17Z" fill="#f0c060" stroke="#c08a30" stroke-width="0.6"/><path d="M13.5 7H16M13.5 13H16" stroke="#2a4a9a" stroke-width="1.2"/></svg>
<svg class="a" style="left:45px;top:117px;" width="13" height="18" viewBox="0 0 13 18"><ellipse cx="6.5" cy="3" rx="5" ry="2" fill="#dfe7f0" stroke="#6a7a8a" stroke-width="0.8"/><path d="M1.5 3V10C1.5 11 11.5 11 11.5 10V3" fill="#b8c8d8" stroke="#6a7a8a" stroke-width="0.8"/><path d="M0.5 10H12.5L6.5 16Z" fill="#f2c560" stroke="#b8862a" stroke-width="0.7"/></svg>
<svg class="a" style="left:65px;top:117px;" width="17" height="18" viewBox="0 0 17 18"><path d="M1 11L8.5 6.5L16 11L8.5 15.5Z" fill="#d4d4d4" stroke="#9a9a9a" stroke-width="0.8"/><path d="M1 7L8.5 2L16 7L8.5 11.5Z" fill="#f5cf70" stroke="#c49632" stroke-width="0.8"/></svg>
<svg class="a" style="left:88px;top:116px;" width="16" height="18" viewBox="0 0 16 18"><path d="M0.5 10.5L8 6L15.5 10.5L8 15.5Z" fill="#f5cf70" stroke="#c49632" stroke-width="0.8"/><rect x="4.5" y="1.5" width="8" height="9" fill="#1ab2e0" stroke="#333"/><path d="M9 1.5V6H12.5" fill="#fff" stroke="#333" stroke-width="0.8"/></svg>
<div class="a" style="left:109px;top:118px;width:1px;height:18px;background:#c5c5c5"></div>
<svg class="a" style="left:116px;top:118px;" width="13" height="16" viewBox="0 0 13 16"><rect x="0.5" y="0.5" width="12" height="15" fill="#fff" stroke="#1f3a6a"/><circle cx="3.5" cy="4.5" r="1.3" fill="none" stroke="#333" stroke-width="0.8"/><circle cx="3.5" cy="10.5" r="1.3" fill="none" stroke="#333" stroke-width="0.8"/><path d="M6 4.5H11M6 7.5H11M6 10.5H11" stroke="#333"/></svg>
<div class="a" style="left:14px;top:138px;width:237px;height:488px;background:#fff;border:1px solid #828790"></div>
<svg class="a" style="left:23px;top:147px;" width="9" height="9" viewBox="0 0 9 9"><rect x="0.5" y="0.5" width="8" height="8" rx="1" fill="url(#gbx)" stroke="#9a9a9a"/><path d="M2 4.5H7" stroke="#2a4a9a" stroke-width="1"/></svg>
<svg class="a" style="left:38px;top:144px;" width="17" height="13" viewBox="0 0 17 13"><path d="M1 10.5L4 8H16L13 10.5Z" fill="#f6d48a" stroke="#c4923a" stroke-width="0.8"/><path d="M1 7.5L4 5H16L13 7.5Z" fill="#f6d48a" stroke="#c4923a" stroke-width="0.8"/><path d="M1 4.5L4 2H16L13 4.5Z" fill="#f6d48a" stroke="#c4923a" stroke-width="0.8"/></svg>
<div class="a t" style="left:59px;top:143.84px;font-size:12px;line-height:12px;font-weight:bold">Слои</div>
<svg class="a" style="left:42px;top:165px;" width="9" height="9" viewBox="0 0 9 9"><rect x="0.5" y="0.5" width="8" height="8" rx="1" fill="url(#gbx)" stroke="#9a9a9a"/><path d="M2 4.5H7" stroke="#2a4a9a" stroke-width="1"/></svg>
<svg class="a" style="left:59px;top:163px;" width="12" height="12" viewBox="0 0 12 12"><rect x="0.5" y="0.5" width="11" height="11" fill="#fff" stroke="#111"/><path d="M2.5 6L4.8 8.5L9.5 3" stroke="#000" stroke-width="1.8" fill="none"/></svg>
<div class="a t" style="left:78px;top:161.84px;font-size:12px;line-height:12px;">clip</div>
<div class="a" style="left:74px;top:181px;width:15px;height:11px;border:1.5px solid #e81a1a;background:#fff"></div>
<svg class="a" style="left:42px;top:200px;" width="9" height="9" viewBox="0 0 9 9"><rect x="0.5" y="0.5" width="8" height="8" rx="1" fill="url(#gbx)" stroke="#9a9a9a"/><path d="M2 4.5H7" stroke="#2a4a9a" stroke-width="1"/></svg>
<svg class="a" style="left:59px;top:198px;" width="12" height="12" viewBox="0 0 12 12"><rect x="0.5" y="0.5" width="11" height="11" fill="#fff" stroke="#111"/><path d="M2.5 6L4.8 8.5L9.5 3" stroke="#000" stroke-width="1.8" fill="none"/></svg>
<div class="a" style="left:76px;top:195px;width:49px;height:18px;background:#3399ff"></div>
<div class="a t" style="left:78px;top:197.84px;font-size:12px;line-height:12px;color:#fff">clip_Clip</div>
<div class="a t" style="left:97px;top:215.84px;font-size:12px;line-height:12px;">RGB</div>
<div class="a" style="left:74px;top:236px;width:15px;height:10px;background:#ff0000;border:1px solid #7a7a7a"></div>
<div class="a" style="left:74px;top:254px;width:15px;height:10px;background:#00ff00;border:1px solid #7a7a7a"></div>
<div class="a" style="left:74px;top:272px;width:15px;height:10px;background:#0000ff;border:1px solid #7a7a7a"></div>
<div class="a t" style="left:92px;top:233.84px;font-size:12px;line-height:12px;">Красный:</div>
<div class="a t" style="left:156px;top:233.84px;font-size:12px;line-height:12px;letter-spacing:-0.3px">Band_1</div>
<div class="a t" style="left:92px;top:251.84px;font-size:12px;line-height:12px;">Зеленый:</div>
<div class="a t" style="left:147px;top:251.84px;font-size:12px;line-height:12px;letter-spacing:-0.3px">Band_2</div>
<div class="a t" style="left:92px;top:269.84px;font-size:12px;line-height:12px;">Синий:</div>
<div class="a t" style="left:140px;top:269.84px;font-size:12px;line-height:12px;letter-spacing:-0.3px">Band_3</div>
<svg class="a" style="left:42px;top:290px;" width="9" height="9" viewBox="0 0 9 9"><rect x="0.5" y="0.5" width="8" height="8" rx="1" fill="url(#gbx)" stroke="#9a9a9a"/><path d="M2 4.5H7" stroke="#2a4a9a" stroke-width="1"/><path d="M4.5 2V7" stroke="#2a4a9a" stroke-width="1"/></svg>
<svg class="a" style="left:59px;top:288px;" width="12" height="12" viewBox="0 0 12 12"><rect x="0.5" y="0.5" width="11" height="11" fill="#fff" stroke="#111"/></svg>
<div class="a t" style="left:78px;top:287.84px;font-size:12px;line-height:12px;">clip.tif</div>
<div class="a" style="left:256px;top:93px;width:790px;height:2px;background:#6d6d6d"></div>
<div class="a" style="left:256px;top:93px;width:2px;height:533px;background:#6d6d6d"></div>
<div class="a" style="left:258px;top:95px;width:770px;height:514px;background:#fff"></div>
<div class="a" style="left:1028px;top:95px;width:17px;height:513px;background:#ececec"></div>
<div class="a" style="left:1027px;top:608px;width:19px;height:18px;background:#f0f0f0"></div>
<div class="a" style="left:1028px;top:112px;width:15px;height:477px;background:linear-gradient(90deg,#f6f6f6 0%,#ededed 45%,#d2d2d6 75%,#bcbcc0 100%);border:1px solid #a6a6a6;border-radius:2px"></div>
<svg class="a" style="left:1036px;top:346px;" width="7" height="7" viewBox="0 0 7 7"><path d="M0 0.5H7M0 3H7M0 5.5H7" stroke="#555" stroke-width="1"/></svg>
<svg class="a" style="left:1032px;top:101px;" width="8" height="5" viewBox="0 0 8 5"><path d="M0 5L4 0.5L8 5Z" fill="#333"/></svg>
<svg class="a" style="left:1032px;top:597px;" width="8" height="5" viewBox="0 0 8 5"><path d="M0 0L8 0L4 4.5Z" fill="#333"/></svg>
<div class="a" style="left:258px;top:608px;width:770px;height:18px;background:#f0f0f0"></div>
<div class="a" style="left:258px;top:609px;width:17px;height:15px;background:linear-gradient(180deg,#f4f4f4,#dcdcdc);border:1px solid #6a6a6a;border-radius:3px"></div>
<svg class="a" style="left:263px;top:612px;" width="8" height="8" viewBox="0 0 8 8"><rect x="0.5" y="0.5" width="7" height="7" fill="#a8d060" stroke="#222"/><path d="M1 7L7 1" stroke="#cfeaf8" stroke-width="1.4"/></svg>
<svg class="a" style="left:280px;top:612px;" width="7" height="9" viewBox="0 0 7 9"><path d="M0.5 0.5H5L6.5 2V8.5H0.5Z" fill="#fff" stroke="#222"/><path d="M2 3H5M2 6H5" stroke="#2a8ad0" stroke-width="1.2"/></svg>
<div class="a" style="left:294px;top:611px;width:1px;height:13px;background:#999"></div>
<svg class="a" style="left:303px;top:611px;" width="11" height="11" viewBox="0 0 11 11"><path d="M1.5 5A4 4 0 0 1 9 3.5M9.5 6A4 4 0 0 1 2 7.5" stroke="#1f5ab0" stroke-width="1.8" fill="none"/><path d="M7 0.5L10.5 4L6.5 4.5Z M4 10.5L0.5 7L4.5 6.5Z" fill="#1f5ab0"/></svg>
<svg class="a" style="left:321px;top:612px;" width="8" height="9" viewBox="0 0 8 9"><rect x="0" y="0" width="2.8" height="9" fill="#1f4fa0"/><rect x="5" y="0" width="2.8" height="9" fill="#1f4fa0"/></svg>
<div class="a" style="left:334px;top:609px;width:17px;height:16px;background:#e6e6e6"></div>
<svg class="a" style="left:339px;top:613px;" width="5" height="8" viewBox="0 0 5 8"><path d="M5 0V8L0 4Z" fill="#333"/></svg>
<div class="a" style="left:351px;top:609px;width:657px;height:15px;background:linear-gradient(180deg,#fafafa 0%,#ececec 45%,#d4d4d8 75%,#c4c4c8 100%);border:1px solid #a6a6a6;border-radius:2px"></div>
<svg class="a" style="left:675px;top:613px;" width="7" height="7" viewBox="0 0 7 7"><path d="M0.5 0V7M3 0V7M5.5 0V7" stroke="#555" stroke-width="1"/></svg>
<div class="a" style="left:1008px;top:609px;width:19px;height:16px;background:#ededed"></div>
<svg class="a" style="left:1016px;top:613px;" width="5" height="8" viewBox="0 0 5 8"><path d="M0 0V8L5 4Z" fill="#333"/></svg>
<svg class="a" style="left:258px;top:95px;overflow:hidden" width="770" height="513" viewBox="0 0 770 513"><defs>
<filter id="nz" x="0" y="0" width="100%" height="100%" color-interpolation-filters="sRGB"><feTurbulence type="fractalNoise" baseFrequency="0.45" numOctaves="2" seed="3"/><feColorMatrix type="matrix" values="1.8 0 0 0 -0.4  1.8 0 0 0 -0.4  1.8 0 0 0 -0.4  0 0 0 0 1"/></filter>
<filter id="bl3"><feGaussianBlur stdDeviation="3"/></filter>
<filter id="bl5"><feGaussianBlur stdDeviation="5"/></filter>
<filter id="bl1"><feGaussianBlur stdDeviation="0.9"/></filter><filter id="bl2"><feGaussianBlur stdDeviation="1.6"/></filter>
<clipPath id="cpL"><path d="M456.5 166.5L689 163.5L692 434.5L461.5 437Z"/></clipPath>
<clipPath id="cpR"><path d="M691 330.5L849 328.5L851 430.5L692 434Z"/></clipPath>
</defs>
<g transform="translate(-258,-95)">
<g clip-path="url(#cpL)">
<rect x="450" y="160" width="250" height="280" fill="#52574d"/>
<g filter="url(#bl5)">
<rect x="450" y="160" width="250" height="40" fill="#525a4d"/>
<ellipse cx="470" cy="270" rx="20" ry="50" fill="#565c4f"/>
<ellipse cx="660" cy="280" rx="32" ry="48" fill="#4d5f48"/>
<ellipse cx="555" cy="288" rx="32" ry="45" fill="#3d3550"/>
<ellipse cx="582" cy="318" rx="20" ry="18" fill="#463e5a"/>
<path d="M540 320L470 392" stroke="#3c3350" stroke-width="20"/>
<ellipse cx="485" cy="392" rx="25" ry="28" fill="#3a3250"/>
<ellipse cx="610" cy="365" rx="50" ry="18" fill="#4a5e45"/>
<ellipse cx="652" cy="402" rx="42" ry="38" fill="#766860"/>
<ellipse cx="600" cy="428" rx="40" ry="12" fill="#6f665a"/>
<ellipse cx="540" cy="420" rx="20" ry="14" fill="#4e5c48"/>
<ellipse cx="610" cy="250" rx="22" ry="25" fill="#4e4a58"/>
</g>
<g filter="url(#bl2)">
<ellipse cx="612" cy="329" rx="12" ry="17" fill="#968771" transform="rotate(35 612 329)"/>
</g>
<g stroke="#3c3450" stroke-width="3.5" fill="none" opacity="0.8" filter="url(#bl1)">
<path d="M553 188C560 178 575 178 578 190"/>
<path d="M565 220C570 228 585 226 590 215"/>
<path d="M480 300C490 295 500 305 512 300C520 296 525 305 535 300"/>
<path d="M470 340C478 350 490 345 500 352"/>
<path d="M460 320C470 318 468 330 462 336"/>
<path d="M590 240C600 232 610 238 618 230"/>
</g>
<rect x="450" y="160" width="250" height="280" filter="url(#nz)" opacity="0.4" style="mix-blend-mode:overlay"/>
<path d="M457 197L689 219" stroke="#f4ece4" stroke-width="1.4"/>
<g filter="url(#bl2)">
<path d="M590 172C600 165 625 163 640 172C650 170 660 178 655 190C665 200 655 215 645 222C630 230 612 226 605 218C590 220 580 210 585 198C575 190 580 178 590 172Z" fill="#fbfbfd"/>
<ellipse cx="658" cy="178" rx="9" ry="11" fill="#f4f4f8"/>
<ellipse cx="592" cy="230" rx="8" ry="3.5" fill="#e8e8f0"/>
<path d="M508 365C513 355 528 352 536 362C548 360 553 372 546 380C538 388 523 386 513 384C505 380 504 372 508 365Z" fill="#fff"/>
<path d="M528 392C535 383 555 383 565 390C570 398 562 405 550 406C538 408 525 402 528 392Z" fill="#fff"/>
<path d="M472 420C478 410 495 408 505 416C515 422 515 432 505 437H470C466 430 468 424 472 420Z" fill="#fbfbfd"/>
<ellipse cx="544" cy="365" rx="4" ry="5" fill="#eef0f4"/>
</g>
</g>
<g clip-path="url(#cpR)">
<rect x="685" y="325" width="170" height="112" fill="#7b665d"/>
<g filter="url(#bl3)">
<path d="M770 330L800 360L850 385L851 340L800 330Z" fill="#806e62"/>
<path d="M760 335L800 370L825 395" stroke="#5a4860" stroke-width="6" fill="none"/>
<path d="M800 360L840 385L851 360" stroke="#938d68" stroke-width="9" fill="none"/>
<path d="M700 392L760 385L800 380" stroke="#8c8668" stroke-width="7" fill="none"/>
<ellipse cx="835" cy="410" rx="22" ry="25" fill="#3c3252"/>
<ellipse cx="810" cy="420" rx="18" ry="12" fill="#463a58"/>
<ellipse cx="700" cy="408" rx="9" ry="10" fill="#3e5a44"/>
<ellipse cx="715" cy="350" rx="20" ry="15" fill="#7e6a62"/>
</g>
<rect x="685" y="325" width="170" height="112" filter="url(#nz)" opacity="0.4" style="mix-blend-mode:overlay"/>
<g filter="url(#bl2)"><ellipse cx="843" cy="405" rx="7" ry="6" fill="#fff"/></g>
</g>
<path d="M456.5 166.5L689 163.5L692 434.5L461.5 437Z" fill="none" stroke="#e0141e" stroke-width="1.5"/>
<path d="M691 330.5L849 328.5L851 430.5L692 434Z" fill="none" stroke="#e0141e" stroke-width="1.5"/>
</g></svg>
<div class="a" style="left:1050px;top:93px;width:300px;height:20px;background:linear-gradient(180deg,#cddbe9,#d3dfeb)"></div>
<div class="a t" style="left:1054px;top:98.34px;font-size:12px;line-height:12px;color:#3c3c48">Каталог</div>
<svg class="a" style="left:1321px;top:99px;" width="8" height="10" viewBox="0 0 8 10"><path d="M1.5 0.5H6.5M2 0.5V6M6 0.5V6M0 6H8M4 6V10" stroke="#222" stroke-width="1.2" fill="none"/></svg>
<svg class="a" style="left:1337px;top:99px;" width="9" height="9" viewBox="0 0 9 9"><path d="M0.5 0.5L8.5 8.5M8.5 0.5L0.5 8.5" stroke="#222" stroke-width="1.4"/></svg>
<div class="a" style="left:1050px;top:113px;width:300px;height:25px;background:linear-gradient(180deg,#fbfcfe 0%,#eef1f8 40%,#d9def0 100%)"></div>
<div class="a" style="left:1050px;top:137px;width:300px;height:1px;background:#c8d0e4"></div>
<svg class="a" style="left:1057px;top:118px;" width="15" height="14" viewBox="0 0 15 14"><path d="M1 7L7 1.5V4.5H14V9.5H7V12.5Z" fill="#f2d24a" stroke="#9a7a1a"/></svg>
<svg class="a" style="left:1080px;top:124px;" width="5" height="3" viewBox="0 0 5 3"><path d="M0 0H5L2.5 3Z" fill="#000"/></svg>
<svg class="a" style="left:1094px;top:118px;" width="15" height="14" viewBox="0 0 15 14"><path d="M14 7L8 1.5V4.5H1V9.5H8V12.5Z" fill="#e4e4e4" stroke="#8a8a8a"/></svg>
<svg class="a" style="left:1116px;top:118px;" width="15" height="15" viewBox="0 0 15 15"><path d="M7 1L13 7H10V11H14V14H5V7H2Z" fill="#f2d24a" stroke="#9a7a1a"/></svg>
<svg class="a" style="left:1138px;top:117px;" width="16" height="16" viewBox="0 0 16 16"><path d="M8 1L15 8H13V15H3V8H1Z" fill="#f2d24a" stroke="#8a6a1a"/><rect x="6" y="9" width="4" height="6" fill="#5a3a1a"/></svg>
<svg class="a" style="left:1163px;top:117px;" width="16" height="16" viewBox="0 0 16 16"><ellipse cx="7" cy="3.5" rx="6" ry="2.5" fill="#e8eef6" stroke="#7a8a9a"/><path d="M1 3.5V12C1 14 13 14 13 12V3.5" fill="#c8d4e0" stroke="#7a8a9a"/><path d="M10 8L15 12.5H14V16H7V12.5H6Z" fill="#f2d24a" stroke="#8a6a1a" stroke-width="0.8"/></svg>
<div class="a" style="left:1185px;top:117px;width:1px;height:18px;background:#a8b0c0"></div>
<svg class="a" style="left:1193px;top:117px;" width="17" height="16" viewBox="0 0 17 16"><g stroke="#3a3a3a" stroke-width="1.2" stroke-dasharray="2.2 0.8"><path d="M0 2H17M0 5H17M0 8H17M0 11H17M0 14H17"/></g></svg>
<svg class="a" style="left:1217px;top:124px;" width="5" height="3" viewBox="0 0 5 3"><path d="M0 0H5L2.5 3Z" fill="#999"/></svg>
<div class="a" style="left:1230px;top:117px;width:1px;height:18px;background:#a8b0c0"></div>
<svg class="a" style="left:1239px;top:117px;" width="16" height="15" viewBox="0 0 16 15"><path d="M0.5 5.5H6L7.5 7H15.5V14.5H0.5Z" fill="#e8c560" stroke="#8a6a2a"/><path d="M9 1V7M6 4H12" stroke="#000" stroke-width="1.8"/></svg>
<div class="a" style="left:1262px;top:117px;width:1px;height:18px;background:#a8b0c0"></div>
<svg class="a" style="left:1271px;top:117px;" width="15" height="16" viewBox="0 0 15 16"><rect x="0.5" y="0.5" width="4" height="4" fill="#f2c040" stroke="#8a6a1a" stroke-width="0.7"/><rect x="5.5" y="5.5" width="4" height="4" fill="#f2c040" stroke="#8a6a1a" stroke-width="0.7"/><rect x="5.5" y="11.5" width="4" height="4" fill="#f2c040" stroke="#8a6a1a" stroke-width="0.7"/><path d="M2.5 4.5V13.5H5.5M2.5 7.5H5.5" stroke="#4a6aa0" fill="none"/><path d="M11 7.5H15M11 13.5H15" stroke="#2a4a9a" stroke-width="1.2"/></svg>
<div class="a" style="left:1293px;top:117px;width:1px;height:18px;background:#a8b0c0"></div>
<svg class="a" style="left:1302px;top:118px;" width="13" height="16" viewBox="0 0 13 16"><rect x="0.5" y="0.5" width="12" height="15" fill="#fff" stroke="#1f3a6a"/><circle cx="3.5" cy="4.5" r="1.3" fill="none" stroke="#333" stroke-width="0.8"/><circle cx="3.5" cy="10.5" r="1.3" fill="none" stroke="#333" stroke-width="0.8"/><path d="M6 4.5H11M6 7.5H11M6 10.5H11" stroke="#333"/></svg>
<div class="a" style="left:1050px;top:138px;width:300px;height:25px;background:#f0f0f0"></div>
<div class="a t" style="left:1052px;top:144.84px;font-size:12px;line-height:12px;color:#1a1a40">Путь:</div>
<div class="a" style="left:1104px;top:140px;width:243px;height:21px;background:#fff;border:1px solid #e0e0e0;border-radius:2px"></div>
<svg class="a" style="left:1107px;top:142px;" width="16" height="16" viewBox="0 0 16 16"><rect x="0.5" y="0.5" width="15" height="15" rx="3" fill="#c6d48a" stroke="#5e6a2a"/><rect x="3.5" y="3.5" width="9" height="9" fill="#eef2d8" stroke="#2a2a1a" stroke-width="0.9"/><path d="M4 4L12 12M12 4L8 8" stroke="#555" stroke-width="0.7"/><circle cx="8" cy="5.5" r="0.9" fill="#111"/><circle cx="5.5" cy="10" r="0.9" fill="#111"/><circle cx="10.5" cy="10" r="0.9" fill="#111"/></svg>
<div class="a t" style="left:1127px;top:144.84px;font-size:12px;line-height:12px;">clip.shp</div>
<svg class="a" style="left:1333px;top:148px;" width="9" height="5" viewBox="0 0 9 5"><path d="M0 0H9L4.5 5Z" fill="#000"/></svg>
<div class="a" style="left:1050px;top:163px;width:297px;height:460px;background:#fff;border-top:2px solid #6d6d6d;border-left:2px solid #6d6d6d"></div>
<svg class="a" style="left:1097px;top:169px;" width="9" height="9" viewBox="0 0 9 9"><rect x="0.5" y="0.5" width="8" height="8" rx="1" fill="url(#gbx)" stroke="#9a9a9a"/><path d="M2 4.5H7" stroke="#2a4a9a" stroke-width="1"/><path d="M4.5 2V7" stroke="#2a4a9a" stroke-width="1"/></svg>
<svg class="a" style="left:1113px;top:166px;" width="16" height="14" viewBox="0 0 16 14"><defs><linearGradient id="fg" x1="0" y1="0" x2="0" y2="1"><stop offset="0" stop-color="#fbf0b8"/><stop offset="1" stop-color="#dcbc50"/></linearGradient></defs><path d="M0.5 2.5Q0.5 0.5 2.5 0.5H6L7.5 2.5H14.5Q15.5 2.5 15.5 3.5V12.5Q15.5 13.5 14.5 13.5H1.5Q0.5 13.5 0.5 12.5Z" fill="url(#fg)" stroke="#8a6e1e"/><path d="M1 4.5H15" stroke="#fff6c8"/></svg>
<div class="a t" style="left:1133px;top:167.84px;font-size:12px;line-height:12px;">FFInput</div>
<svg class="a" style="left:1097px;top:186px;" width="9" height="9" viewBox="0 0 9 9"><rect x="0.5" y="0.5" width="8" height="8" rx="1" fill="url(#gbx)" stroke="#9a9a9a"/><path d="M2 4.5H7" stroke="#2a4a9a" stroke-width="1"/><path d="M4.5 2V7" stroke="#2a4a9a" stroke-width="1"/></svg>
<svg class="a" style="left:1113px;top:183px;" width="16" height="14" viewBox="0 0 16 14"><defs><linearGradient id="fg" x1="0" y1="0" x2="0" y2="1"><stop offset="0" stop-color="#fbf0b8"/><stop offset="1" stop-color="#dcbc50"/></linearGradient></defs><path d="M0.5 2.5Q0.5 0.5 2.5 0.5H6L7.5 2.5H14.5Q15.5 2.5 15.5 3.5V12.5Q15.5 13.5 14.5 13.5H1.5Q0.5 13.5 0.5 12.5Z" fill="url(#fg)" stroke="#8a6e1e"/><path d="M1 4.5H15" stroke="#fff6c8"/></svg>
<div class="a t" style="left:1133px;top:184.84px;font-size:12px;line-height:12px;">FFOutput</div>
<svg class="a" style="left:1097px;top:203px;" width="9" height="9" viewBox="0 0 9 9"><rect x="0.5" y="0.5" width="8" height="8" rx="1" fill="url(#gbx)" stroke="#9a9a9a"/><path d="M2 4.5H7" stroke="#2a4a9a" stroke-width="1"/><path d="M4.5 2V7" stroke="#2a4a9a" stroke-width="1"/></svg>
<svg class="a" style="left:1113px;top:200px;" width="16" height="14" viewBox="0 0 16 14"><defs><linearGradient id="fg" x1="0" y1="0" x2="0" y2="1"><stop offset="0" stop-color="#fbf0b8"/><stop offset="1" stop-color="#dcbc50"/></linearGradient></defs><path d="M0.5 2.5Q0.5 0.5 2.5 0.5H6L7.5 2.5H14.5Q15.5 2.5 15.5 3.5V12.5Q15.5 13.5 14.5 13.5H1.5Q0.5 13.5 0.5 12.5Z" fill="url(#fg)" stroke="#8a6e1e"/><path d="M1 4.5H15" stroke="#fff6c8"/></svg>
<div class="a t" style="left:1133px;top:201.84px;font-size:12px;line-height:12px;">Install</div>
<svg class="a" style="left:1097px;top:220px;" width="9" height="9" viewBox="0 0 9 9"><rect x="0.5" y="0.5" width="8" height="8" rx="1" fill="url(#gbx)" stroke="#9a9a9a"/><path d="M2 4.5H7" stroke="#2a4a9a" stroke-width="1"/><path d="M4.5 2V7" stroke="#2a4a9a" stroke-width="1"/></svg>
<svg class="a" style="left:1113px;top:217px;" width="16" height="14" viewBox="0 0 16 14"><defs><linearGradient id="fg" x1="0" y1="0" x2="0" y2="1"><stop offset="0" stop-color="#fbf0b8"/><stop offset="1" stop-color="#dcbc50"/></linearGradient></defs><path d="M0.5 2.5Q0.5 0.5 2.5 0.5H6L7.5 2.5H14.5Q15.5 2.5 15.5 3.5V12.5Q15.5 13.5 14.5 13.5H1.5Q0.5 13.5 0.5 12.5Z" fill="url(#fg)" stroke="#8a6e1e"/><path d="M1 4.5H15" stroke="#fff6c8"/></svg>
<div class="a t" style="left:1133px;top:218.84px;font-size:12px;line-height:12px;">PSAutoRecover</div>
<svg class="a" style="left:1097px;top:237px;" width="9" height="9" viewBox="0 0 9 9"><rect x="0.5" y="0.5" width="8" height="8" rx="1" fill="url(#gbx)" stroke="#9a9a9a"/><path d="M2 4.5H7" stroke="#2a4a9a" stroke-width="1"/><path d="M4.5 2V7" stroke="#2a4a9a" stroke-width="1"/></svg>
<svg class="a" style="left:1113px;top:234px;" width="16" height="14" viewBox="0 0 16 14"><defs><linearGradient id="fg" x1="0" y1="0" x2="0" y2="1"><stop offset="0" stop-color="#fbf0b8"/><stop offset="1" stop-color="#dcbc50"/></linearGradient></defs><path d="M0.5 2.5Q0.5 0.5 2.5 0.5H6L7.5 2.5H14.5Q15.5 2.5 15.5 3.5V12.5Q15.5 13.5 14.5 13.5H1.5Q0.5 13.5 0.5 12.5Z" fill="url(#fg)" stroke="#8a6e1e"/><path d="M1 4.5H15" stroke="#fff6c8"/></svg>
<div class="a t" style="left:1133px;top:235.84px;font-size:12px;line-height:12px;">QMS</div>
<svg class="a" style="left:1097px;top:254px;" width="9" height="9" viewBox="0 0 9 9"><rect x="0.5" y="0.5" width="8" height="8" rx="1" fill="url(#gbx)" stroke="#9a9a9a"/><path d="M2 4.5H7" stroke="#2a4a9a" stroke-width="1"/><path d="M4.5 2V7" stroke="#2a4a9a" stroke-width="1"/></svg>
<svg class="a" style="left:1113px;top:251px;" width="16" height="14" viewBox="0 0 16 14"><defs><linearGradient id="fg" x1="0" y1="0" x2="0" y2="1"><stop offset="0" stop-color="#fbf0b8"/><stop offset="1" stop-color="#dcbc50"/></linearGradient></defs><path d="M0.5 2.5Q0.5 0.5 2.5 0.5H6L7.5 2.5H14.5Q15.5 2.5 15.5 3.5V12.5Q15.5 13.5 14.5 13.5H1.5Q0.5 13.5 0.5 12.5Z" fill="url(#fg)" stroke="#8a6e1e"/><path d="M1 4.5H15" stroke="#fff6c8"/></svg>
<div class="a t" style="left:1133px;top:252.84px;font-size:12px;line-height:12px;">System Volume Information</div>
<svg class="a" style="left:1097px;top:271px;" width="9" height="9" viewBox="0 0 9 9"><rect x="0.5" y="0.5" width="8" height="8" rx="1" fill="url(#gbx)" stroke="#9a9a9a"/><path d="M2 4.5H7" stroke="#2a4a9a" stroke-width="1"/><path d="M4.5 2V7" stroke="#2a4a9a" stroke-width="1"/></svg>
<svg class="a" style="left:1113px;top:268px;" width="16" height="14" viewBox="0 0 16 14"><defs><linearGradient id="fg" x1="0" y1="0" x2="0" y2="1"><stop offset="0" stop-color="#fbf0b8"/><stop offset="1" stop-color="#dcbc50"/></linearGradient></defs><path d="M0.5 2.5Q0.5 0.5 2.5 0.5H6L7.5 2.5H14.5Q15.5 2.5 15.5 3.5V12.5Q15.5 13.5 14.5 13.5H1.5Q0.5 13.5 0.5 12.5Z" fill="url(#fg)" stroke="#8a6e1e"/><path d="M1 4.5H15" stroke="#fff6c8"/></svg>
<div class="a t" style="left:1133px;top:269.84px;font-size:12px;line-height:12px;">Tools</div>
<svg class="a" style="left:1097px;top:288px;" width="9" height="9" viewBox="0 0 9 9"><rect x="0.5" y="0.5" width="8" height="8" rx="1" fill="url(#gbx)" stroke="#9a9a9a"/><path d="M2 4.5H7" stroke="#2a4a9a" stroke-width="1"/><path d="M4.5 2V7" stroke="#2a4a9a" stroke-width="1"/></svg>
<svg class="a" style="left:1113px;top:285px;" width="16" height="14" viewBox="0 0 16 14"><defs><linearGradient id="fg" x1="0" y1="0" x2="0" y2="1"><stop offset="0" stop-color="#fbf0b8"/><stop offset="1" stop-color="#dcbc50"/></linearGradient></defs><path d="M0.5 2.5Q0.5 0.5 2.5 0.5H6L7.5 2.5H14.5Q15.5 2.5 15.5 3.5V12.5Q15.5 13.5 14.5 13.5H1.5Q0.5 13.5 0.5 12.5Z" fill="url(#fg)" stroke="#8a6e1e"/><path d="M1 4.5H15" stroke="#fff6c8"/></svg>
<div class="a t" style="left:1133px;top:286.84px;font-size:12px;line-height:12px;">TravelMate P253-M</div>
<svg class="a" style="left:1097px;top:305px;" width="9" height="9" viewBox="0 0 9 9"><rect x="0.5" y="0.5" width="8" height="8" rx="1" fill="url(#gbx)" stroke="#9a9a9a"/><path d="M2 4.5H7" stroke="#2a4a9a" stroke-width="1"/><path d="M4.5 2V7" stroke="#2a4a9a" stroke-width="1"/></svg>
<svg class="a" style="left:1113px;top:302px;" width="16" height="14" viewBox="0 0 16 14"><defs><linearGradient id="fg" x1="0" y1="0" x2="0" y2="1"><stop offset="0" stop-color="#fbf0b8"/><stop offset="1" stop-color="#dcbc50"/></linearGradient></defs><path d="M0.5 2.5Q0.5 0.5 2.5 0.5H6L7.5 2.5H14.5Q15.5 2.5 15.5 3.5V12.5Q15.5 13.5 14.5 13.5H1.5Q0.5 13.5 0.5 12.5Z" fill="url(#fg)" stroke="#8a6e1e"/><path d="M1 4.5H15" stroke="#fff6c8"/></svg>
<div class="a t" style="left:1133px;top:303.84px;font-size:12px;line-height:12px;">Инструкции</div>
<svg class="a" style="left:1097px;top:322px;" width="9" height="9" viewBox="0 0 9 9"><rect x="0.5" y="0.5" width="8" height="8" rx="1" fill="url(#gbx)" stroke="#9a9a9a"/><path d="M2 4.5H7" stroke="#2a4a9a" stroke-width="1"/><path d="M4.5 2V7" stroke="#2a4a9a" stroke-width="1"/></svg>
<svg class="a" style="left:1113px;top:319px;" width="16" height="14" viewBox="0 0 16 14"><defs><linearGradient id="fg" x1="0" y1="0" x2="0" y2="1"><stop offset="0" stop-color="#fbf0b8"/><stop offset="1" stop-color="#dcbc50"/></linearGradient></defs><path d="M0.5 2.5Q0.5 0.5 2.5 0.5H6L7.5 2.5H14.5Q15.5 2.5 15.5 3.5V12.5Q15.5 13.5 14.5 13.5H1.5Q0.5 13.5 0.5 12.5Z" fill="url(#fg)" stroke="#8a6e1e"/><path d="M1 4.5H15" stroke="#fff6c8"/></svg>
<div class="a t" style="left:1133px;top:320.84px;font-size:12px;line-height:12px;">Карты</div>
<svg class="a" style="left:1097px;top:339px;" width="9" height="9" viewBox="0 0 9 9"><rect x="0.5" y="0.5" width="8" height="8" rx="1" fill="url(#gbx)" stroke="#9a9a9a"/><path d="M2 4.5H7" stroke="#2a4a9a" stroke-width="1"/><path d="M4.5 2V7" stroke="#2a4a9a" stroke-width="1"/></svg>
<svg class="a" style="left:1113px;top:336px;" width="16" height="14" viewBox="0 0 16 14"><defs><linearGradient id="fg" x1="0" y1="0" x2="0" y2="1"><stop offset="0" stop-color="#fbf0b8"/><stop offset="1" stop-color="#dcbc50"/></linearGradient></defs><path d="M0.5 2.5Q0.5 0.5 2.5 0.5H6L7.5 2.5H14.5Q15.5 2.5 15.5 3.5V12.5Q15.5 13.5 14.5 13.5H1.5Q0.5 13.5 0.5 12.5Z" fill="url(#fg)" stroke="#8a6e1e"/><path d="M1 4.5H15" stroke="#fff6c8"/></svg>
<div class="a t" style="left:1133px;top:337.84px;font-size:12px;line-height:12px;">Ключи</div>
<svg class="a" style="left:1097px;top:356px;" width="9" height="9" viewBox="0 0 9 9"><rect x="0.5" y="0.5" width="8" height="8" rx="1" fill="url(#gbx)" stroke="#9a9a9a"/><path d="M2 4.5H7" stroke="#2a4a9a" stroke-width="1"/><path d="M4.5 2V7" stroke="#2a4a9a" stroke-width="1"/></svg>
<svg class="a" style="left:1113px;top:353px;" width="16" height="14" viewBox="0 0 16 14"><defs><linearGradient id="fg" x1="0" y1="0" x2="0" y2="1"><stop offset="0" stop-color="#fbf0b8"/><stop offset="1" stop-color="#dcbc50"/></linearGradient></defs><path d="M0.5 2.5Q0.5 0.5 2.5 0.5H6L7.5 2.5H14.5Q15.5 2.5 15.5 3.5V12.5Q15.5 13.5 14.5 13.5H1.5Q0.5 13.5 0.5 12.5Z" fill="url(#fg)" stroke="#8a6e1e"/><path d="M1 4.5H15" stroke="#fff6c8"/></svg>
<div class="a t" style="left:1133px;top:354.84px;font-size:12px;line-height:12px;">Новая файловая база геоданных.gdb</div>
<svg class="a" style="left:1097px;top:373px;" width="9" height="9" viewBox="0 0 9 9"><rect x="0.5" y="0.5" width="8" height="8" rx="1" fill="url(#gbx)" stroke="#9a9a9a"/><path d="M2 4.5H7" stroke="#2a4a9a" stroke-width="1"/><path d="M4.5 2V7" stroke="#2a4a9a" stroke-width="1"/></svg>
<svg class="a" style="left:1113px;top:370px;" width="16" height="14" viewBox="0 0 16 14"><defs><linearGradient id="fg" x1="0" y1="0" x2="0" y2="1"><stop offset="0" stop-color="#fbf0b8"/><stop offset="1" stop-color="#dcbc50"/></linearGradient></defs><path d="M0.5 2.5Q0.5 0.5 2.5 0.5H6L7.5 2.5H14.5Q15.5 2.5 15.5 3.5V12.5Q15.5 13.5 14.5 13.5H1.5Q0.5 13.5 0.5 12.5Z" fill="url(#fg)" stroke="#8a6e1e"/><path d="M1 4.5H15" stroke="#fff6c8"/></svg>
<div class="a t" style="left:1133px;top:371.84px;font-size:12px;line-height:12px;">Привязки</div>
<svg class="a" style="left:1097px;top:390px;" width="9" height="9" viewBox="0 0 9 9"><rect x="0.5" y="0.5" width="8" height="8" rx="1" fill="url(#gbx)" stroke="#9a9a9a"/><path d="M2 4.5H7" stroke="#2a4a9a" stroke-width="1"/><path d="M4.5 2V7" stroke="#2a4a9a" stroke-width="1"/></svg>
<svg class="a" style="left:1113px;top:387px;" width="16" height="14" viewBox="0 0 16 14"><defs><linearGradient id="fg" x1="0" y1="0" x2="0" y2="1"><stop offset="0" stop-color="#fbf0b8"/><stop offset="1" stop-color="#dcbc50"/></linearGradient></defs><path d="M0.5 2.5Q0.5 0.5 2.5 0.5H6L7.5 2.5H14.5Q15.5 2.5 15.5 3.5V12.5Q15.5 13.5 14.5 13.5H1.5Q0.5 13.5 0.5 12.5Z" fill="url(#fg)" stroke="#8a6e1e"/><path d="M1 4.5H15" stroke="#fff6c8"/></svg>
<div class="a t" style="left:1133px;top:388.84px;font-size:12px;line-height:12px;">Программы</div>
<svg class="a" style="left:1097px;top:407px;" width="9" height="9" viewBox="0 0 9 9"><rect x="0.5" y="0.5" width="8" height="8" rx="1" fill="url(#gbx)" stroke="#9a9a9a"/><path d="M2 4.5H7" stroke="#2a4a9a" stroke-width="1"/></svg>
<svg class="a" style="left:1113px;top:404px;" width="16" height="14" viewBox="0 0 16 14"><defs><linearGradient id="fg" x1="0" y1="0" x2="0" y2="1"><stop offset="0" stop-color="#fbf0b8"/><stop offset="1" stop-color="#dcbc50"/></linearGradient></defs><path d="M0.5 2.5Q0.5 0.5 2.5 0.5H6L7.5 2.5H14.5Q15.5 2.5 15.5 3.5V12.5Q15.5 13.5 14.5 13.5H1.5Q0.5 13.5 0.5 12.5Z" fill="url(#fg)" stroke="#8a6e1e"/><path d="M1 4.5H15" stroke="#fff6c8"/></svg>
<div class="a t" style="left:1133px;top:405.84px;font-size:12px;line-height:12px;">Проекты</div>
<svg class="a" style="left:1116px;top:424px;" width="9" height="9" viewBox="0 0 9 9"><rect x="0.5" y="0.5" width="8" height="8" rx="1" fill="url(#gbx)" stroke="#9a9a9a"/><path d="M2 4.5H7" stroke="#2a4a9a" stroke-width="1"/></svg>
<svg class="a" style="left:1132px;top:421px;" width="16" height="14" viewBox="0 0 16 14"><defs><linearGradient id="fg" x1="0" y1="0" x2="0" y2="1"><stop offset="0" stop-color="#fbf0b8"/><stop offset="1" stop-color="#dcbc50"/></linearGradient></defs><path d="M0.5 2.5Q0.5 0.5 2.5 0.5H6L7.5 2.5H14.5Q15.5 2.5 15.5 3.5V12.5Q15.5 13.5 14.5 13.5H1.5Q0.5 13.5 0.5 12.5Z" fill="url(#fg)" stroke="#8a6e1e"/><path d="M1 4.5H15" stroke="#fff6c8"/></svg>
<div class="a t" style="left:1152px;top:422.84px;font-size:12px;line-height:12px;">Map</div>
<svg class="a" style="left:1150px;top:437px;" width="16" height="16" viewBox="0 0 16 16"><rect x="0.5" y="0.5" width="15" height="15" rx="3" fill="#c6d48a" stroke="#5e6a2a"/><rect x="3.5" y="3.5" width="9" height="9" fill="#eef2d8" stroke="#2a2a1a" stroke-width="0.9"/><path d="M4 4L12 12M12 4L8 8" stroke="#555" stroke-width="0.7"/><circle cx="8" cy="5.5" r="0.9" fill="#111"/><circle cx="5.5" cy="10" r="0.9" fill="#111"/><circle cx="10.5" cy="10" r="0.9" fill="#111"/></svg>
<div class="a t" style="left:1171px;top:439.84px;font-size:12px;line-height:12px;">12.shp</div>
<svg class="a" style="left:1135px;top:458px;" width="9" height="9" viewBox="0 0 9 9"><rect x="0.5" y="0.5" width="8" height="8" rx="1" fill="url(#gbx)" stroke="#9a9a9a"/><path d="M2 4.5H7" stroke="#2a4a9a" stroke-width="1"/><path d="M4.5 2V7" stroke="#2a4a9a" stroke-width="1"/></svg>
<svg class="a" style="left:1150px;top:454px;" width="16" height="16" viewBox="0 0 16 16"><rect x="0.5" y="1.5" width="15" height="13" rx="2" fill="#56668a" stroke="#3a4058"/><rect x="1.5" y="2.5" width="2" height="2" fill="#f2e04a"/><rect x="4.3" y="2.5" width="2" height="2" fill="#f2e04a"/><rect x="7.1" y="2.5" width="2" height="2" fill="#f2e04a"/><rect x="9.899999999999999" y="2.5" width="2" height="2" fill="#f2e04a"/><rect x="12.7" y="2.5" width="2" height="2" fill="#f2e04a"/><rect x="1.5" y="5.4" width="2" height="2" fill="#f2e04a"/><rect x="4.3" y="5.4" width="2" height="2" fill="#f2e04a"/><rect x="7.1" y="5.4" width="2" height="2" fill="#f2e04a"/><rect x="9.899999999999999" y="5.4" width="2" height="2" fill="#f2e04a"/><rect x="12.7" y="5.4" width="2" height="2" fill="#f2e04a"/><rect x="1.5" y="8.3" width="2" height="2" fill="#f2e04a"/><rect x="4.3" y="8.3" width="2" height="2" fill="#f2e04a"/><rect x="7.1" y="8.3" width="2" height="2" fill="#f2e04a"/><rect x="9.899999999999999" y="8.3" width="2" height="2" fill="#f2e04a"/><rect x="12.7" y="8.3" width="2" height="2" fill="#f2e04a"/><rect x="1.5" y="11.2" width="2" height="2" fill="#f2e04a"/><rect x="4.3" y="11.2" width="2" height="2" fill="#f2e04a"/><rect x="7.1" y="11.2" width="2" height="2" fill="#f2e04a"/><rect x="9.899999999999999" y="11.2" width="2" height="2" fill="#f2e04a"/><rect x="12.7" y="11.2" width="2" height="2" fill="#f2e04a"/></svg>
<div class="a t" style="left:1171px;top:456.84px;font-size:12px;line-height:12px;">clip.tif</div>
<div class="a" style="left:1169px;top:471px;width:45px;height:17px;background:#e6e6e6"></div>
<svg class="a" style="left:1150px;top:471px;" width="16" height="16" viewBox="0 0 16 16"><rect x="0.5" y="0.5" width="15" height="15" rx="3" fill="#c6d48a" stroke="#5e6a2a"/><rect x="3.5" y="3.5" width="9" height="9" fill="#eef2d8" stroke="#2a2a1a" stroke-width="0.9"/><path d="M4 4L12 12M12 4L8 8" stroke="#555" stroke-width="0.7"/><circle cx="8" cy="5.5" r="0.9" fill="#111"/><circle cx="5.5" cy="10" r="0.9" fill="#111"/><circle cx="10.5" cy="10" r="0.9" fill="#111"/></svg>
<div class="a t" style="left:1171px;top:473.84px;font-size:12px;line-height:12px;">clip.shp</div>
<svg class="a" style="left:1135px;top:492px;" width="9" height="9" viewBox="0 0 9 9"><rect x="0.5" y="0.5" width="8" height="8" rx="1" fill="url(#gbx)" stroke="#9a9a9a"/><path d="M2 4.5H7" stroke="#2a4a9a" stroke-width="1"/><path d="M4.5 2V7" stroke="#2a4a9a" stroke-width="1"/></svg>
<svg class="a" style="left:1150px;top:488px;" width="16" height="16" viewBox="0 0 16 16"><rect x="0.5" y="1.5" width="15" height="13" rx="2" fill="#56668a" stroke="#3a4058"/><rect x="1.5" y="2.5" width="2" height="2" fill="#f2e04a"/><rect x="4.3" y="2.5" width="2" height="2" fill="#f2e04a"/><rect x="7.1" y="2.5" width="2" height="2" fill="#f2e04a"/><rect x="9.899999999999999" y="2.5" width="2" height="2" fill="#f2e04a"/><rect x="12.7" y="2.5" width="2" height="2" fill="#f2e04a"/><rect x="1.5" y="5.4" width="2" height="2" fill="#f2e04a"/><rect x="4.3" y="5.4" width="2" height="2" fill="#f2e04a"/><rect x="7.1" y="5.4" width="2" height="2" fill="#f2e04a"/><rect x="9.899999999999999" y="5.4" width="2" height="2" fill="#f2e04a"/><rect x="12.7" y="5.4" width="2" height="2" fill="#f2e04a"/><rect x="1.5" y="8.3" width="2" height="2" fill="#f2e04a"/><rect x="4.3" y="8.3" width="2" height="2" fill="#f2e04a"/><rect x="7.1" y="8.3" width="2" height="2" fill="#f2e04a"/><rect x="9.899999999999999" y="8.3" width="2" height="2" fill="#f2e04a"/><rect x="12.7" y="8.3" width="2" height="2" fill="#f2e04a"/><rect x="1.5" y="11.2" width="2" height="2" fill="#f2e04a"/><rect x="4.3" y="11.2" width="2" height="2" fill="#f2e04a"/><rect x="7.1" y="11.2" width="2" height="2" fill="#f2e04a"/><rect x="9.899999999999999" y="11.2" width="2" height="2" fill="#f2e04a"/><rect x="12.7" y="11.2" width="2" height="2" fill="#f2e04a"/></svg>
<div class="a t" style="left:1171px;top:490.84px;font-size:12px;line-height:12px;">clip1.tif</div>
<svg class="a" style="left:1135px;top:509px;" width="9" height="9" viewBox="0 0 9 9"><rect x="0.5" y="0.5" width="8" height="8" rx="1" fill="url(#gbx)" stroke="#9a9a9a"/><path d="M2 4.5H7" stroke="#2a4a9a" stroke-width="1"/><path d="M4.5 2V7" stroke="#2a4a9a" stroke-width="1"/></svg>
<svg class="a" style="left:1150px;top:505px;" width="16" height="16" viewBox="0 0 16 16"><rect x="0.5" y="1.5" width="15" height="13" rx="2" fill="#56668a" stroke="#3a4058"/><rect x="1.5" y="2.5" width="2" height="2" fill="#f2e04a"/><rect x="4.3" y="2.5" width="2" height="2" fill="#f2e04a"/><rect x="7.1" y="2.5" width="2" height="2" fill="#f2e04a"/><rect x="9.899999999999999" y="2.5" width="2" height="2" fill="#f2e04a"/><rect x="12.7" y="2.5" width="2" height="2" fill="#f2e04a"/><rect x="1.5" y="5.4" width="2" height="2" fill="#f2e04a"/><rect x="4.3" y="5.4" width="2" height="2" fill="#f2e04a"/><rect x="7.1" y="5.4" width="2" height="2" fill="#f2e04a"/><rect x="9.899999999999999" y="5.4" width="2" height="2" fill="#f2e04a"/><rect x="12.7" y="5.4" width="2" height="2" fill="#f2e04a"/><rect x="1.5" y="8.3" width="2" height="2" fill="#f2e04a"/><rect x="4.3" y="8.3" width="2" height="2" fill="#f2e04a"/><rect x="7.1" y="8.3" width="2" height="2" fill="#f2e04a"/><rect x="9.899999999999999" y="8.3" width="2" height="2" fill="#f2e04a"/><rect x="12.7" y="8.3" width="2" height="2" fill="#f2e04a"/><rect x="1.5" y="11.2" width="2" height="2" fill="#f2e04a"/><rect x="4.3" y="11.2" width="2" height="2" fill="#f2e04a"/><rect x="7.1" y="11.2" width="2" height="2" fill="#f2e04a"/><rect x="9.899999999999999" y="11.2" width="2" height="2" fill="#f2e04a"/><rect x="12.7" y="11.2" width="2" height="2" fill="#f2e04a"/></svg>
<div class="a t" style="left:1171px;top:507.84px;font-size:12px;line-height:12px;">clip2.tif</div>
<svg class="a" style="left:1150px;top:522px;" width="16" height="16" viewBox="0 0 16 16"><rect x="0.5" y="0.5" width="15" height="15" rx="3" fill="#c6d48a" stroke="#5e6a2a"/><rect x="3.5" y="3.5" width="9" height="9" fill="#eef2d8" stroke="#2a2a1a" stroke-width="0.9"/><path d="M4 4L12 12M12 4L8 8" stroke="#555" stroke-width="0.7"/><circle cx="8" cy="5.5" r="0.9" fill="#111"/><circle cx="5.5" cy="10" r="0.9" fill="#111"/><circle cx="10.5" cy="10" r="0.9" fill="#111"/></svg>
<div class="a t" style="left:1171px;top:524.84px;font-size:12px;line-height:12px;">Export_Output.shp</div>
<svg class="a" style="left:1150px;top:539px;" width="16" height="16" viewBox="0 0 16 16"><path d="M2.5 0.5H11L14.5 4V15.5H2.5Z" fill="#fff" stroke="#4a6a9a"/><circle cx="6.5" cy="8" r="5" fill="#2a70c0"/><circle cx="6.5" cy="8" r="3" fill="#a8d8f8"/><path d="M9.5 11L13 15" stroke="#8a4a1a" stroke-width="2"/><path d="M4 6C5 7 6 5 8 7" stroke="#3aa03a" fill="none"/></svg>
<div class="a t" style="left:1171px;top:541.84px;font-size:12px;line-height:12px;">map.mxd</div>
<svg class="a" style="left:1116px;top:560px;" width="9" height="9" viewBox="0 0 9 9"><rect x="0.5" y="0.5" width="8" height="8" rx="1" fill="url(#gbx)" stroke="#9a9a9a"/><path d="M2 4.5H7" stroke="#2a4a9a" stroke-width="1"/><path d="M4.5 2V7" stroke="#2a4a9a" stroke-width="1"/></svg>
<svg class="a" style="left:1132px;top:557px;" width="16" height="14" viewBox="0 0 16 14"><defs><linearGradient id="fg" x1="0" y1="0" x2="0" y2="1"><stop offset="0" stop-color="#fbf0b8"/><stop offset="1" stop-color="#dcbc50"/></linearGradient></defs><path d="M0.5 2.5Q0.5 0.5 2.5 0.5H6L7.5 2.5H14.5Q15.5 2.5 15.5 3.5V12.5Q15.5 13.5 14.5 13.5H1.5Q0.5 13.5 0.5 12.5Z" fill="url(#fg)" stroke="#8a6e1e"/><path d="M1 4.5H15" stroke="#fff6c8"/></svg>
<div class="a t" style="left:1152px;top:558.84px;font-size:12px;line-height:12px;">Вологодская</div>
<svg class="a" style="left:1116px;top:577px;" width="9" height="9" viewBox="0 0 9 9"><rect x="0.5" y="0.5" width="8" height="8" rx="1" fill="url(#gbx)" stroke="#9a9a9a"/><path d="M2 4.5H7" stroke="#2a4a9a" stroke-width="1"/><path d="M4.5 2V7" stroke="#2a4a9a" stroke-width="1"/></svg>
<svg class="a" style="left:1132px;top:574px;" width="16" height="14" viewBox="0 0 16 14"><defs><linearGradient id="fg" x1="0" y1="0" x2="0" y2="1"><stop offset="0" stop-color="#fbf0b8"/><stop offset="1" stop-color="#dcbc50"/></linearGradient></defs><path d="M0.5 2.5Q0.5 0.5 2.5 0.5H6L7.5 2.5H14.5Q15.5 2.5 15.5 3.5V12.5Q15.5 13.5 14.5 13.5H1.5Q0.5 13.5 0.5 12.5Z" fill="url(#fg)" stroke="#8a6e1e"/><path d="M1 4.5H15" stroke="#fff6c8"/></svg>
<div class="a t" style="left:1152px;top:575.84px;font-size:12px;line-height:12px;">Московская</div>
<svg class="a" style="left:1116px;top:594px;" width="9" height="9" viewBox="0 0 9 9"><rect x="0.5" y="0.5" width="8" height="8" rx="1" fill="url(#gbx)" stroke="#9a9a9a"/><path d="M2 4.5H7" stroke="#2a4a9a" stroke-width="1"/><path d="M4.5 2V7" stroke="#2a4a9a" stroke-width="1"/></svg>
<svg class="a" style="left:1132px;top:591px;" width="16" height="14" viewBox="0 0 16 14"><defs><linearGradient id="fg" x1="0" y1="0" x2="0" y2="1"><stop offset="0" stop-color="#fbf0b8"/><stop offset="1" stop-color="#dcbc50"/></linearGradient></defs><path d="M0.5 2.5Q0.5 0.5 2.5 0.5H6L7.5 2.5H14.5Q15.5 2.5 15.5 3.5V12.5Q15.5 13.5 14.5 13.5H1.5Q0.5 13.5 0.5 12.5Z" fill="url(#fg)" stroke="#8a6e1e"/><path d="M1 4.5H15" stroke="#fff6c8"/></svg>
<div class="a t" style="left:1152px;top:592.84px;font-size:12px;line-height:12px;">Смоленская</div>
<div class="a" style="left:1329px;top:165px;width:17px;height:441px;background:#ececec"></div>
<svg class="a" style="left:1333px;top:173px;" width="8" height="5" viewBox="0 0 8 5"><path d="M0 5L4 0.5L8 5Z" fill="#333"/></svg>
<div class="a" style="left:1329px;top:282px;width:16px;height:176px;background:linear-gradient(90deg,#f6f6f6 0%,#ededed 45%,#d2d2d6 75%,#bcbcc0 100%);border:1px solid #a6a6a6;border-radius:2px"></div>
<svg class="a" style="left:1333px;top:366px;" width="7" height="7" viewBox="0 0 7 7"><path d="M0 0.5H7M0 3H7M0 5.5H7" stroke="#555" stroke-width="1"/></svg>
<svg class="a" style="left:1333px;top:595px;" width="8" height="5" viewBox="0 0 8 5"><path d="M0 0L8 0L4 4.5Z" fill="#333"/></svg>
<div class="a" style="left:1052px;top:605px;width:277px;height:18px;background:#ececec"></div>
<svg class="a" style="left:1057px;top:610px;" width="5" height="8" viewBox="0 0 5 8"><path d="M5 0V8L0 4Z" fill="#333"/></svg>
<div class="a" style="left:1070px;top:606px;width:171px;height:15px;background:linear-gradient(180deg,#fafafa 0%,#ececec 45%,#d4d4d8 75%,#c4c4c8 100%);border:1px solid #a6a6a6;border-radius:2px"></div>
<svg class="a" style="left:1150px;top:610px;" width="7" height="7" viewBox="0 0 7 7"><path d="M0.5 0V7M3 0V7M5.5 0V7" stroke="#555" stroke-width="1"/></svg>
<svg class="a" style="left:1318px;top:610px;" width="5" height="8" viewBox="0 0 5 8"><path d="M0 0V8L5 4Z" fill="#333"/></svg>
<div class="a" style="left:1329px;top:605px;width:17px;height:18px;background:#f0f0f0"></div>
<div class="a" style="left:14px;top:626px;width:1336px;height:21px;background:#f0f0f0"></div>
<div class="a" style="left:927px;top:628px;width:1px;height:18px;background:#e4e4e4;box-shadow:1px 0 0 #f8f8f8"></div>
<div class="a" style="left:1053px;top:628px;width:1px;height:18px;background:#e4e4e4;box-shadow:1px 0 0 #f8f8f8"></div>
<div class="a" style="left:1073px;top:628px;width:1px;height:18px;background:#e4e4e4;box-shadow:1px 0 0 #f8f8f8"></div>
<div class="a" style="left:1332px;top:628px;width:1px;height:18px;background:#e4e4e4"></div>
<div class="a t" style="left:1077px;top:631.34px;font-size:12px;line-height:12px;color:#111;letter-spacing:-0.35px">5198377.192&nbsp; 577733.921 Метры</div>
<svg class="a" style="left:1339px;top:636px;" width="9" height="9" viewBox="0 0 9 9"><g fill="#b0b0b0"><rect x="6" y="0" width="2" height="2"/><rect x="3" y="3" width="2" height="2"/><rect x="6" y="3" width="2" height="2"/><rect x="0" y="6" width="2" height="2"/><rect x="3" y="6" width="2" height="2"/><rect x="6" y="6" width="2" height="2"/></g></svg>
<div class="a" style="left:0px;top:675px;width:1366px;height:39px;background:linear-gradient(100deg,#0b0e12 0%,#14181d 40%,#0c0f13 55%,#171b20 70%,#0b0e12 85%,#15191e 100%);border-top:1px solid #5d6268"></div>
<div class="a" style="left:0px;top:714px;width:1366px;height:54px;background:#fff"></div>
<svg class="a" style="left:7px;top:675px;" width="40" height="39" viewBox="0 0 40 39"><defs><linearGradient id="orbt" x1="0" y1="0" x2="0" y2="1"><stop offset="0" stop-color="#c8d8e8"/><stop offset="1" stop-color="#5a7aa0"/></linearGradient>
<radialGradient id="orbb" cx="0.5" cy="1" r="0.8"><stop offset="0" stop-color="#20d8ff"/><stop offset="0.5" stop-color="#1a70b8"/><stop offset="1" stop-color="#0a3a78"/></radialGradient></defs>
<circle cx="20" cy="19.5" r="18.3" fill="url(#orbb)" stroke="#8a9098" stroke-width="0.8"/>
<path d="M2.5 18.5A17.5 17.5 0 0 1 37.5 18.5C30 16 10 16 2.5 18.5Z" fill="url(#orbt)"/>
<path d="M11 7C14 6 17 6.5 20 8L18 16.5C15 15 12 14.5 9 15.5Z" fill="#f0602a"/>
<path d="M21 9C24 10.5 27 11 30.5 9.5L28.5 18C25 19.5 22 19 19 17.5Z" fill="#8ac83a"/>
<path d="M8.5 17C11.5 16 14.5 16.5 17.5 18L15.5 26.5C12.5 25 9.5 24.5 6.5 25.5Z" fill="#3aa0e8"/>
<path d="M18.5 19C21.5 20.5 24.5 21 28 19.5L26 28C22.5 29.5 19.5 29 16.5 27.5Z" fill="#f8c02a"/></svg>
<svg class="a" style="left:57px;top:678px;" width="9" height="32" viewBox="0 0 9 32"><rect x="0.5" y="1" width="1.2" height="1.2" fill="#6a6f76"/><rect x="0.5" y="5" width="1.2" height="1.2" fill="#6a6f76"/><rect x="0.5" y="9" width="1.2" height="1.2" fill="#6a6f76"/><rect x="0.5" y="13" width="1.2" height="1.2" fill="#6a6f76"/><rect x="0.5" y="17" width="1.2" height="1.2" fill="#6a6f76"/><rect x="0.5" y="21" width="1.2" height="1.2" fill="#6a6f76"/><rect x="0.5" y="25" width="1.2" height="1.2" fill="#6a6f76"/><rect x="0.5" y="29" width="1.2" height="1.2" fill="#6a6f76"/><rect x="3.5" y="1" width="1.2" height="1.2" fill="#6a6f76"/><rect x="3.5" y="5" width="1.2" height="1.2" fill="#6a6f76"/><rect x="3.5" y="9" width="1.2" height="1.2" fill="#6a6f76"/><rect x="3.5" y="13" width="1.2" height="1.2" fill="#6a6f76"/><rect x="3.5" y="17" width="1.2" height="1.2" fill="#6a6f76"/><rect x="3.5" y="21" width="1.2" height="1.2" fill="#6a6f76"/><rect x="3.5" y="25" width="1.2" height="1.2" fill="#6a6f76"/><rect x="3.5" y="29" width="1.2" height="1.2" fill="#6a6f76"/><rect x="6.5" y="1" width="1.2" height="1.2" fill="#6a6f76"/><rect x="6.5" y="5" width="1.2" height="1.2" fill="#6a6f76"/><rect x="6.5" y="9" width="1.2" height="1.2" fill="#6a6f76"/><rect x="6.5" y="13" width="1.2" height="1.2" fill="#6a6f76"/><rect x="6.5" y="17" width="1.2" height="1.2" fill="#6a6f76"/><rect x="6.5" y="21" width="1.2" height="1.2" fill="#6a6f76"/><rect x="6.5" y="25" width="1.2" height="1.2" fill="#6a6f76"/><rect x="6.5" y="29" width="1.2" height="1.2" fill="#6a6f76"/></svg>
<svg class="a" style="left:89px;top:678px;" width="33" height="32" viewBox="0 0 33 32"><defs><linearGradient id="wdl" x1="0" y1="0" x2="1" y2="1"><stop offset="0" stop-color="#e8f0fc"/><stop offset="0.5" stop-color="#5a88d8"/><stop offset="1" stop-color="#1f4aa8"/></linearGradient><linearGradient id="xll" x1="0" y1="0" x2="1" y2="1"><stop offset="0" stop-color="#eef6e8"/><stop offset="0.5" stop-color="#7ab060"/><stop offset="1" stop-color="#3a8a2a"/></linearGradient></defs><path d="M2 28L4 6C4 3 6 1 9 1H26V26Z" fill="url(#wdl)" stroke="#dfe8f8" stroke-width="1"/><path d="M9 6L30 8L28 33L7 30Z" fill="#f6f8fc" stroke="#c8d0e0" stroke-width="0.6"/><text x="16" y="18" font-family="Liberation Sans" font-style="italic" font-weight="bold" font-size="11" fill="#2a5cb8" text-anchor="middle">W</text><path d="M22 12H27M22 15H27M22 18H27M10 22H27M10 25H26" stroke="#2a5cb8" stroke-width="1.8"/></svg>
<svg class="a" style="left:151px;top:678px;" width="33" height="32" viewBox="0 0 33 32"><path d="M2 28L4 6C4 3 6 1 9 1H26V26Z" fill="url(#xll)" stroke="#6ac840" stroke-width="1"/><path d="M9 6L30 8L28 33L7 30Z" fill="#f2f6ec" stroke="#c8d8c0" stroke-width="0.6"/><path d="M11 10L19 20M18 10L12 20" stroke="#2a7a1a" stroke-width="3"/><g fill="#6aa858"><rect x="21" y="11" width="6" height="4"/><rect x="21" y="17" width="6" height="4"/><rect x="10" y="23" width="5" height="4"/><rect x="16" y="23" width="5" height="4"/><rect x="22" y="23" width="5" height="4"/></g></svg>
<svg class="a" style="left:213px;top:677px;" width="32" height="34" viewBox="0 0 32 34"><ellipse cx="16" cy="17" rx="15" ry="15.5" fill="#e41c2c"/><ellipse cx="16" cy="17" rx="7" ry="11.5" fill="#0b0e12"/></svg>
<div class="a" style="left:262px;top:676px;width:158px;height:37px;background:linear-gradient(172deg,#8a8d91 0%,#5a5d61 36%,#303336 46%,#1f2226 100%);border:1px solid #63676c;border-radius:3px"></div>
<svg class="a" style="left:266px;top:676px;" width="44" height="38" viewBox="0 0 44 38"><defs><linearGradient id="gmg" x1="0" y1="0" x2="0" y2="1"><stop offset="0" stop-color="#a4cc50"/><stop offset="1" stop-color="#5e8a34"/></linearGradient></defs><path d="M6 16C5 29 14 34 21 34C30 34 36 28 36 21C33 27 27 30 21 30C13 30 7 25 6 16Z" fill="#0e4a78"/><path d="M29.5 4.5C24 2 8 2 7 16C7 24 13 28 21 28C29 28 36 23 36 18L23 10.5L29.5 16.5C27 19.5 24 20 20 20C15 20 13 16 13 12C13 7 18 4 22 4C25 4 28 4 29.5 4.5Z" fill="url(#gmg)"/></svg>
<div class="a t" style="left:307px;top:688.34px;font-size:12px;line-height:12px;color:#fff">Global Mapper v2...</div>
<div class="a" style="left:424px;top:676px;width:158px;height:37px;background:linear-gradient(172deg,#cacbcd 0%,#a8aaac 40%,#7e8082 46%,#6a6c6f 100%);border:1px solid #c8cacc;border-radius:3px"></div>
<svg class="a" style="left:432px;top:678px;" width="34" height="33" viewBox="0 0 34 33"><defs><radialGradient id="glb" cx="0.4" cy="0.35" r="0.7"><stop offset="0" stop-color="#6ac0f0"/><stop offset="0.6" stop-color="#1a6ab8"/><stop offset="1" stop-color="#0a2a6a"/></radialGradient></defs>
<circle cx="17" cy="16" r="15" fill="url(#glb)"/>
<path d="M3 12C6 6 12 3 16 5C14 9 10 10 8 14C6 18 4 20 3 18Z M20 8C24 7 29 10 30 15C27 17 23 14 21 12Z M18 24C22 22 27 23 26 27C23 30 19 30 17 28Z" fill="#3aa040"/>
<path d="M19 20L28 30" stroke="#c8621a" stroke-width="3.6" stroke-linecap="round"/>
<circle cx="14" cy="13" r="8" fill="#a8dcf8" stroke="#e8eef2" stroke-width="2.2"/>
<circle cx="14" cy="13" r="9.2" fill="none" stroke="#7a8a98" stroke-width="0.6"/>
<ellipse cx="12" cy="10.5" rx="4" ry="3" fill="#fff" opacity="0.5"/></svg>
<div class="a t" style="left:469px;top:688.34px;font-size:12px;line-height:12px;color:#fff">Без названия - Ar...</div>
<svg class="a" style="left:1105px;top:678px;" width="8" height="32" viewBox="0 0 8 32"><rect x="0" y="2" width="1" height="1" fill="#5a5f66"/><rect x="0" y="5" width="1" height="1" fill="#5a5f66"/><rect x="0" y="8" width="1" height="1" fill="#5a5f66"/><rect x="0" y="11" width="1" height="1" fill="#5a5f66"/><rect x="0" y="14" width="1" height="1" fill="#5a5f66"/><rect x="0" y="17" width="1" height="1" fill="#5a5f66"/><rect x="0" y="20" width="1" height="1" fill="#5a5f66"/><rect x="0" y="23" width="1" height="1" fill="#5a5f66"/><rect x="0" y="26" width="1" height="1" fill="#5a5f66"/><rect x="0" y="29" width="1" height="1" fill="#5a5f66"/><rect x="3" y="2" width="1" height="1" fill="#5a5f66"/><rect x="3" y="5" width="1" height="1" fill="#5a5f66"/><rect x="3" y="8" width="1" height="1" fill="#5a5f66"/><rect x="3" y="11" width="1" height="1" fill="#5a5f66"/><rect x="3" y="14" width="1" height="1" fill="#5a5f66"/><rect x="3" y="17" width="1" height="1" fill="#5a5f66"/><rect x="3" y="20" width="1" height="1" fill="#5a5f66"/><rect x="3" y="23" width="1" height="1" fill="#5a5f66"/><rect x="3" y="26" width="1" height="1" fill="#5a5f66"/><rect x="3" y="29" width="1" height="1" fill="#5a5f66"/><rect x="6" y="2" width="1" height="1" fill="#5a5f66"/><rect x="6" y="5" width="1" height="1" fill="#5a5f66"/><rect x="6" y="8" width="1" height="1" fill="#5a5f66"/><rect x="6" y="11" width="1" height="1" fill="#5a5f66"/><rect x="6" y="14" width="1" height="1" fill="#5a5f66"/><rect x="6" y="17" width="1" height="1" fill="#5a5f66"/><rect x="6" y="20" width="1" height="1" fill="#5a5f66"/><rect x="6" y="23" width="1" height="1" fill="#5a5f66"/><rect x="6" y="26" width="1" height="1" fill="#5a5f66"/><rect x="6" y="29" width="1" height="1" fill="#5a5f66"/></svg>
<div class="a t" style="left:1122px;top:685.84px;font-size:12px;line-height:12px;color:#fff">EN</div>
<svg class="a" style="left:1154px;top:692px;" width="8" height="5" viewBox="0 0 8 5"><path d="M0 5L4 0L8 5Z" fill="#fff"/></svg>
<div class="a" style="left:1174px;top:687px;width:17px;height:16px;background:#e01a1a"></div>
<svg class="a" style="left:1176px;top:689px;" width="13" height="12" viewBox="0 0 13 12"><path d="M2 2L11 6L7 7L9 11L7.5 11.5L5.5 7.5L2 10Z" fill="none" stroke="#fff" stroke-width="1.2"/></svg>
<svg class="a" style="left:1199px;top:687px;" width="13" height="17" viewBox="0 0 13 17"><rect x="0.5" y="4.5" width="8" height="11" rx="1" fill="none" stroke="#fff" stroke-width="1.2"/><path d="M6 1V5M9 1V5M4 5H11V9C11 11 9 12 7.5 12S4 11 4 9Z M7.5 12V16" stroke="#fff" stroke-width="1.3" fill="#fff"/></svg>
<svg class="a" style="left:1223px;top:687px;" width="15" height="16" viewBox="0 0 15 16"><rect x="3.5" y="4.5" width="11" height="8" fill="none" stroke="#fff" stroke-width="1.2"/><path d="M9 12.5V15M5 15.5H13M0.5 0V9M3 0V4" stroke="#fff" stroke-width="1.2"/></svg>
<svg class="a" style="left:1246px;top:688px;" width="16" height="15" viewBox="0 0 16 15"><path d="M1 5H4L8 1V14L4 10H1Z" fill="#fff"/><path d="M10 5C11 6 11 9 10 10M12.5 3C14.5 5 14.5 10 12.5 12" stroke="#fff" stroke-width="1.2" fill="none"/></svg>
<div class="a t" style="left:1299px;top:679.84px;font-size:12px;line-height:12px;color:#fff">9:26</div>
<div class="a t" style="left:1281px;top:697.84px;font-size:12px;line-height:12px;color:#fff;letter-spacing:-0.4px">Пт 31.05.19</div>
<div class="a" style="left:1352px;top:676px;width:14px;height:37px;background:linear-gradient(90deg,#3a3e44,#25292e);border:1px solid #5a5e64;border-right:none"></div></body></html>
